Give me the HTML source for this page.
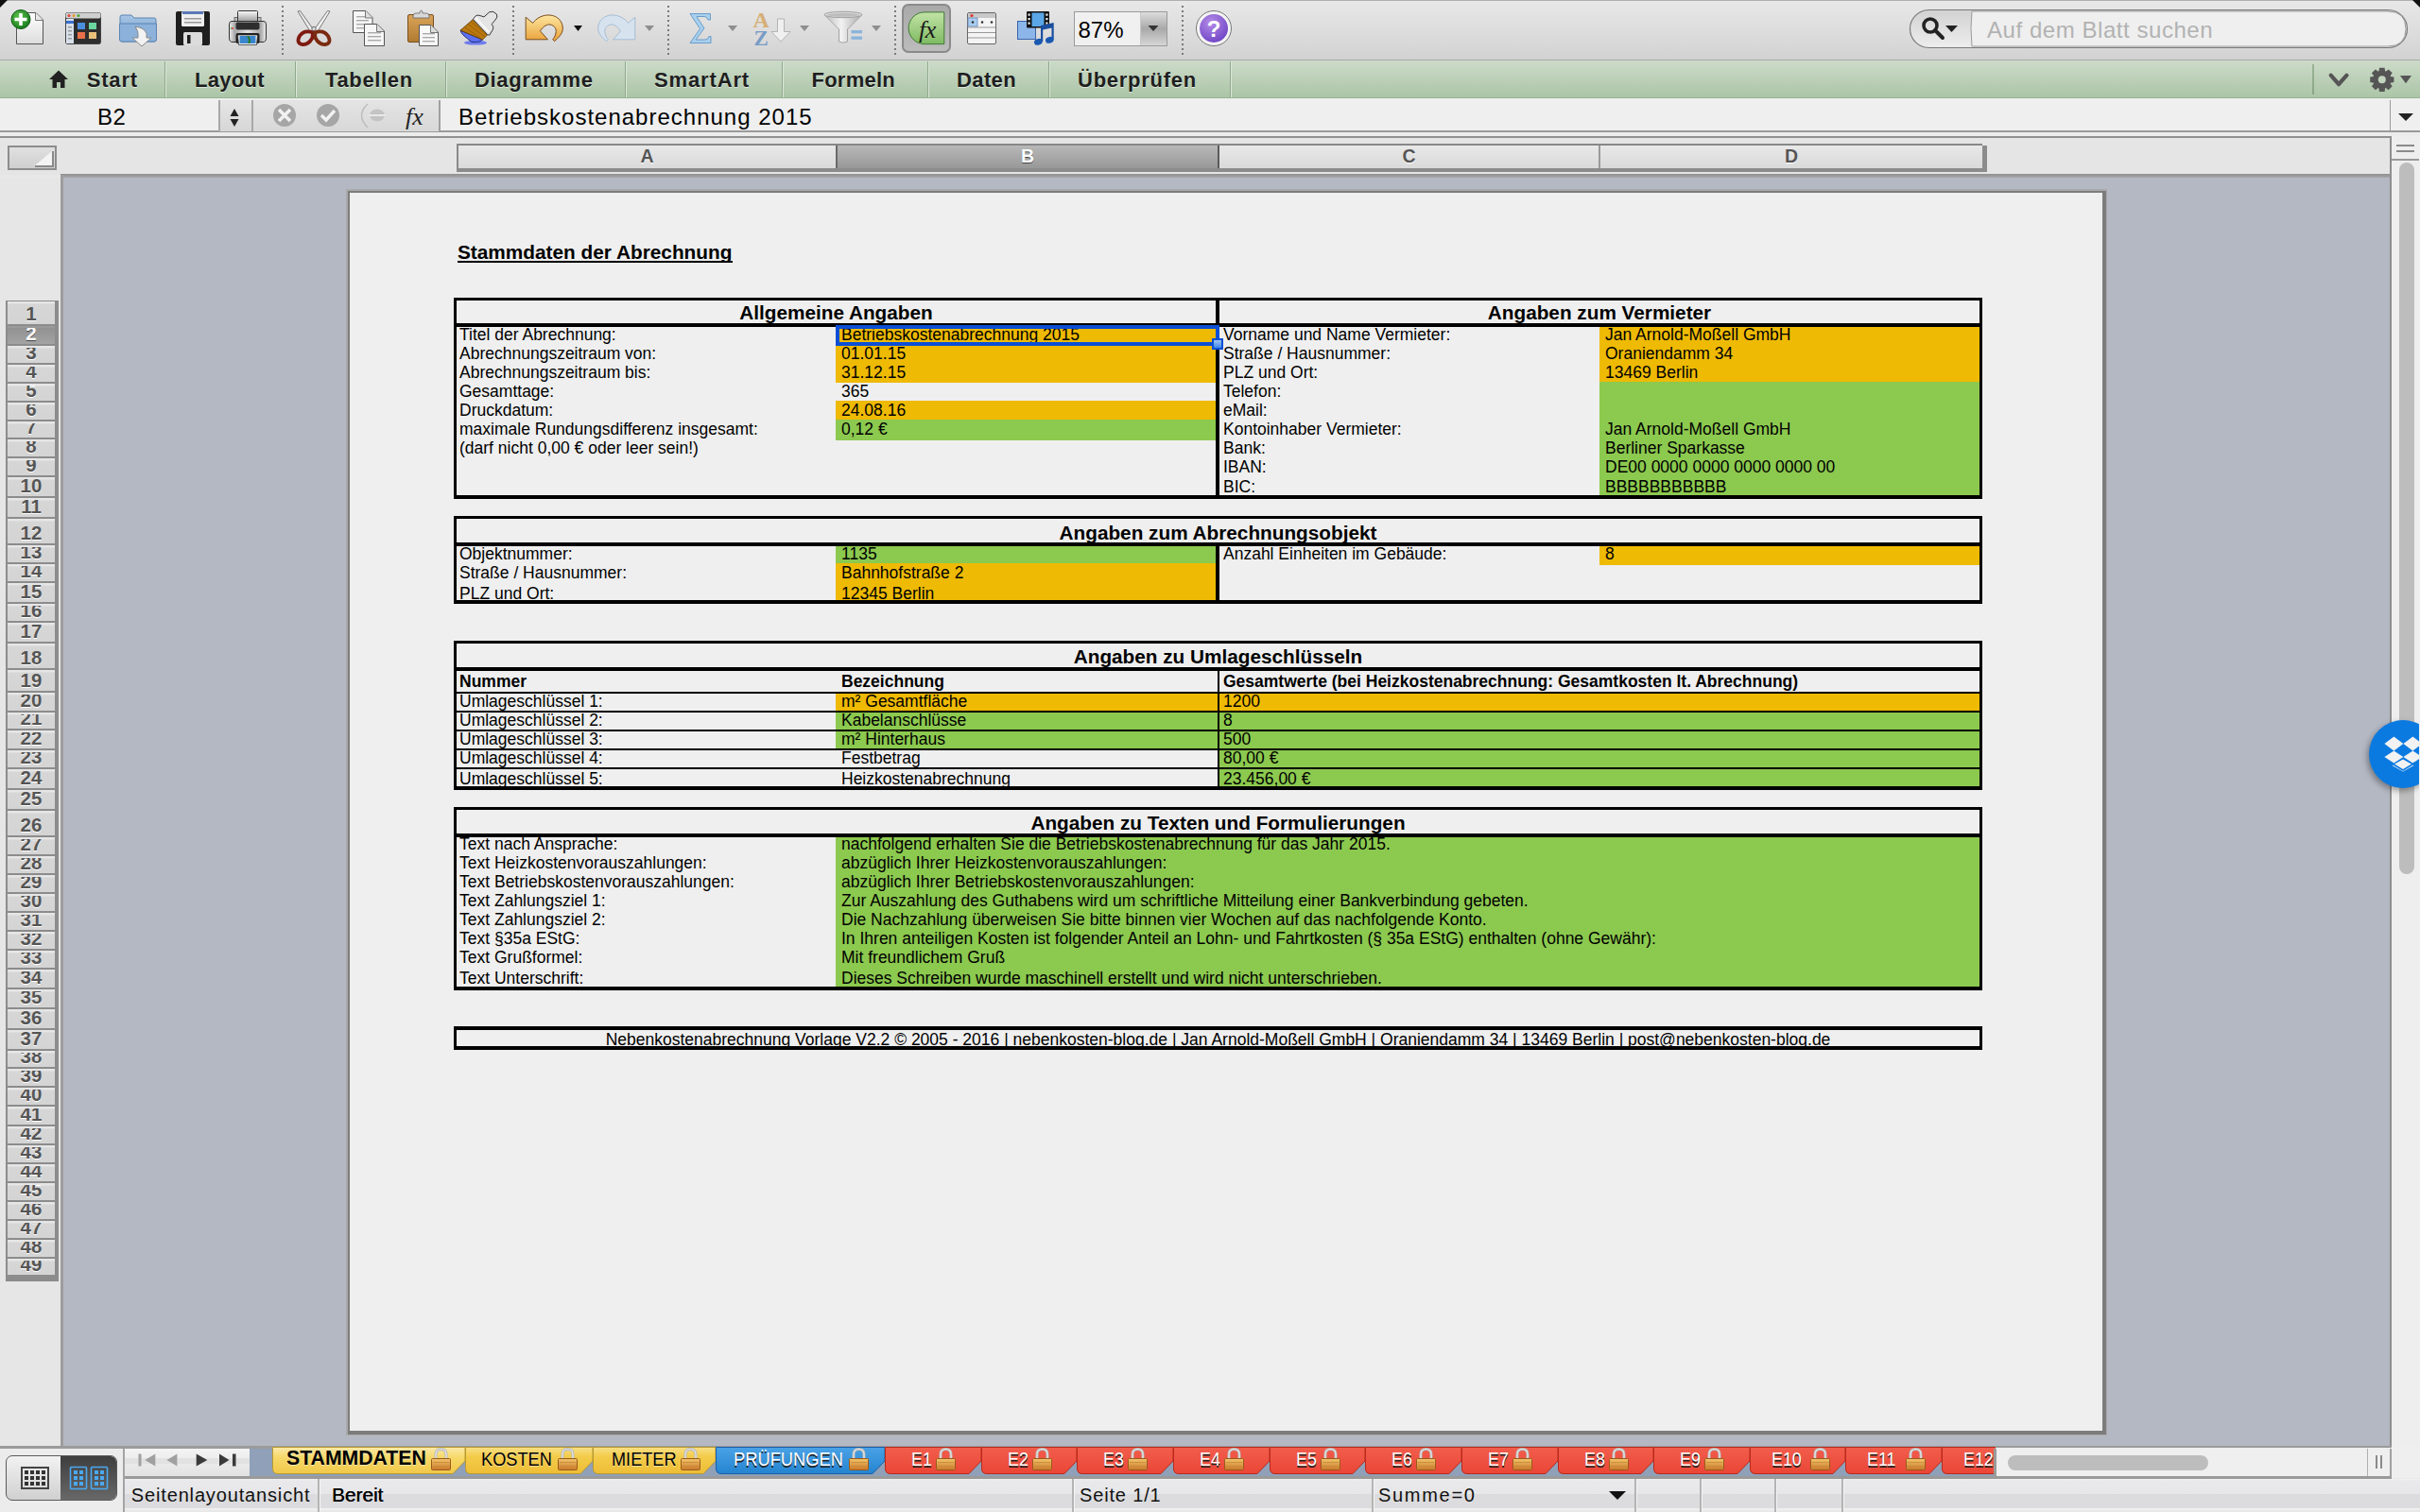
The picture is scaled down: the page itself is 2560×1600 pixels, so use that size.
<!DOCTYPE html>
<html><head><meta charset="utf-8"><title>Excel</title>
<style>
html,body{margin:0;padding:0;}
body{width:2560px;height:1600px;overflow:hidden;position:relative;background:#e8e8e8;font-family:'Liberation Sans', sans-serif;}
body div{position:absolute;}
.t{white-space:pre;}
</style></head><body>
<div style="left:0px;top:0px;width:2560px;height:64px;background:linear-gradient(#e8e8e8,#d2d2d2);"></div>
<div style="left:0px;top:0px;width:2560px;height:1px;background:#b0b0b0;"></div>
<div style="left:0px;top:63px;width:2560px;height:1px;background:#a9a9a9;"></div>
<div style="left:0px;top:64px;width:2560px;height:40px;background:linear-gradient(#cddbc9,#aac4a6);"></div>
<div style="left:0px;top:103px;width:2560px;height:1px;background:#98b294;"></div>
<div style="left:0px;top:104px;width:2560px;height:3px;background:linear-gradient(#dfe9dd,#efefef);"></div>
<div style="left:0px;top:104px;width:2560px;height:35px;background:#efefef;"></div>
<div style="left:0px;top:138px;width:2560px;height:2px;background:#9a9a9a;"></div>
<div style="left:0px;top:140px;width:2560px;height:4px;background:#ececec;"></div>
<div style="left:0px;top:144px;width:2560px;height:2px;background:#919191;"></div>
<div style="left:0px;top:146px;width:2528px;height:39px;background:#e5e5e5;"></div>
<div style="left:64px;top:184px;width:2464px;height:4px;background:linear-gradient(#8e8e8e,#a8a8a8);"></div>
<div style="left:0px;top:188px;width:64px;height:1342px;background:#e6e6e6;"></div>
<div style="left:64px;top:185px;width:3px;height:1345px;background:#9d9d9d;"></div>
<div style="left:67px;top:188px;width:2461px;height:1342px;background:#b4b8c3;"></div>
<div style="left:366px;top:200px;width:1863px;height:1319px;background:#a9a9a9;"></div>
<div style="left:368px;top:202px;width:1860px;height:1316px;background:#7c7c7c;"></div>
<div style="left:370px;top:204px;width:1854px;height:1310px;background:#efefef;"></div>
<div style="left:2528px;top:144px;width:2px;height:1386px;background:#8e8e8e;"></div>
<div style="left:2530px;top:144px;width:30px;height:1386px;background:#eeeeee;"></div>
<div style="left:0px;top:1530px;width:2560px;height:70px;background:#e8e8e8;"></div>
<div style="left:0px;top:1530px;width:2530px;height:3px;background:#9b9b9b;"></div>
<div class="t" style="left:484px;top:256.59px;font-size:20.8px;line-height:20.8px;font-weight:700;color:#000;">Stammdaten der Abrechnung</div>
<div style="left:484px;top:276px;width:291px;height:2px;background:#000;"></div>
<div style="left:884px;top:346px;width:402px;height:20px;background:#eeba04;"></div>
<div style="left:884px;top:366px;width:402px;height:39px;background:#eeba04;"></div>
<div style="left:884px;top:424px;width:402px;height:20px;background:#eeba04;"></div>
<div style="left:884px;top:444px;width:402px;height:22px;background:#8cc94f;"></div>
<div style="left:1692px;top:346px;width:402px;height:58px;background:#eeba04;"></div>
<div style="left:1692px;top:404px;width:402px;height:120px;background:#8cc94f;"></div>
<div style="left:480px;top:315px;width:3px;height:213px;background:#000;"></div>
<div style="left:2094px;top:315px;width:3px;height:213px;background:#000;"></div>
<div style="left:480px;top:315px;width:1617px;height:3px;background:#000;"></div>
<div style="left:480px;top:524px;width:1617px;height:4px;background:#000;"></div>
<div style="left:480px;top:342px;width:1617px;height:4px;background:#000;"></div>
<div style="left:1286px;top:315px;width:4px;height:213px;background:#000;"></div>
<div class="t" style="left:483px;width:803px;text-align:center;top:321.44px;font-size:20.75px;line-height:20.75px;font-weight:700;color:#000;">Allgemeine Angaben</div>
<div class="t" style="left:1290px;width:804px;text-align:center;top:321.44px;font-size:20.75px;line-height:20.75px;font-weight:700;color:#000;">Angaben zum Vermieter</div>
<div class="t" style="left:486px;top:345.89px;font-size:17.5px;line-height:17.5px;font-weight:400;color:#000;">Titel der Abrechnung:</div>
<div class="t" style="left:890px;top:345.89px;font-size:17.5px;line-height:17.5px;font-weight:400;color:#000;">Betriebskostenabrechnung 2015</div>
<div class="t" style="left:1294px;top:345.89px;font-size:17.5px;line-height:17.5px;font-weight:400;color:#000;">Vorname und Name Vermieter:</div>
<div class="t" style="left:1698px;top:345.89px;font-size:17.5px;line-height:17.5px;font-weight:400;color:#000;">Jan Arnold-Moßell GmbH</div>
<div class="t" style="left:486px;top:365.89px;font-size:17.5px;line-height:17.5px;font-weight:400;color:#000;">Abrechnungszeitraum von:</div>
<div class="t" style="left:890px;top:365.89px;font-size:17.5px;line-height:17.5px;font-weight:400;color:#000;">01.01.15</div>
<div class="t" style="left:1294px;top:365.89px;font-size:17.5px;line-height:17.5px;font-weight:400;color:#000;">Straße / Hausnummer:</div>
<div class="t" style="left:1698px;top:365.89px;font-size:17.5px;line-height:17.5px;font-weight:400;color:#000;">Oraniendamm 34</div>
<div class="t" style="left:486px;top:385.89px;font-size:17.5px;line-height:17.5px;font-weight:400;color:#000;">Abrechnungszeitraum bis:</div>
<div class="t" style="left:890px;top:385.89px;font-size:17.5px;line-height:17.5px;font-weight:400;color:#000;">31.12.15</div>
<div class="t" style="left:1294px;top:385.89px;font-size:17.5px;line-height:17.5px;font-weight:400;color:#000;">PLZ und Ort:</div>
<div class="t" style="left:1698px;top:385.89px;font-size:17.5px;line-height:17.5px;font-weight:400;color:#000;">13469 Berlin</div>
<div class="t" style="left:486px;top:405.89px;font-size:17.5px;line-height:17.5px;font-weight:400;color:#000;">Gesamttage:</div>
<div class="t" style="left:890px;top:405.89px;font-size:17.5px;line-height:17.5px;font-weight:400;color:#000;">365</div>
<div class="t" style="left:1294px;top:405.89px;font-size:17.5px;line-height:17.5px;font-weight:400;color:#000;">Telefon:</div>
<div class="t" style="left:486px;top:425.89px;font-size:17.5px;line-height:17.5px;font-weight:400;color:#000;">Druckdatum:</div>
<div class="t" style="left:890px;top:425.89px;font-size:17.5px;line-height:17.5px;font-weight:400;color:#000;">24.08.16</div>
<div class="t" style="left:1294px;top:425.89px;font-size:17.5px;line-height:17.5px;font-weight:400;color:#000;">eMail:</div>
<div class="t" style="left:486px;top:445.89px;font-size:17.5px;line-height:17.5px;font-weight:400;color:#000;">maximale Rundungsdifferenz insgesamt:</div>
<div class="t" style="left:890px;top:445.89px;font-size:17.5px;line-height:17.5px;font-weight:400;color:#000;">0,12 €</div>
<div class="t" style="left:1294px;top:445.89px;font-size:17.5px;line-height:17.5px;font-weight:400;color:#000;">Kontoinhaber Vermieter:</div>
<div class="t" style="left:1698px;top:445.89px;font-size:17.5px;line-height:17.5px;font-weight:400;color:#000;">Jan Arnold-Moßell GmbH</div>
<div class="t" style="left:486px;top:465.89px;font-size:17.5px;line-height:17.5px;font-weight:400;color:#000;">(darf nicht 0,00 € oder leer sein!)</div>
<div class="t" style="left:1294px;top:465.89px;font-size:17.5px;line-height:17.5px;font-weight:400;color:#000;">Bank:</div>
<div class="t" style="left:1698px;top:465.89px;font-size:17.5px;line-height:17.5px;font-weight:400;color:#000;">Berliner Sparkasse</div>
<div class="t" style="left:1294px;top:485.89px;font-size:17.5px;line-height:17.5px;font-weight:400;color:#000;">IBAN:</div>
<div class="t" style="left:1698px;top:485.89px;font-size:17.5px;line-height:17.5px;font-weight:400;color:#000;">DE00 0000 0000 0000 0000 00</div>
<div class="t" style="left:1294px;top:506.89px;font-size:17.5px;line-height:17.5px;font-weight:400;color:#000;">BIC:</div>
<div class="t" style="left:1698px;top:506.89px;font-size:17.5px;line-height:17.5px;font-weight:400;color:#000;">BBBBBBBBBBB</div>
<div style="left:884px;top:344px;width:406px;height:22px;box-sizing:border-box;border:4px solid #0b4fd6;"></div>
<div style="left:1282px;top:358px;width:12px;height:12px;box-sizing:border-box;border:2px solid #0b4fd6;background:linear-gradient(#9cc4f4,#3d86e8);"></div>
<div style="left:884px;top:578px;width:402px;height:18px;background:#8cc94f;"></div>
<div style="left:884px;top:596px;width:402px;height:39px;background:#eeba04;"></div>
<div style="left:1692px;top:578px;width:402px;height:20px;background:#eeba04;"></div>
<div style="left:480px;top:546px;width:3px;height:93px;background:#000;"></div>
<div style="left:2094px;top:546px;width:3px;height:93px;background:#000;"></div>
<div style="left:480px;top:546px;width:1617px;height:3px;background:#000;"></div>
<div style="left:480px;top:635px;width:1617px;height:4px;background:#000;"></div>
<div style="left:480px;top:574px;width:1617px;height:4px;background:#000;"></div>
<div style="left:1286px;top:574px;width:4px;height:65px;background:#000;"></div>
<div class="t" style="left:483px;width:1611px;text-align:center;top:553.64px;font-size:20.75px;line-height:20.75px;font-weight:700;color:#000;">Angaben zum Abrechnungsobjekt</div>
<div class="t" style="left:486px;top:577.89px;font-size:17.5px;line-height:17.5px;font-weight:400;color:#000;">Objektnummer:</div>
<div class="t" style="left:890px;top:577.89px;font-size:17.5px;line-height:17.5px;font-weight:400;color:#000;">1135</div>
<div class="t" style="left:1294px;top:577.89px;font-size:17.5px;line-height:17.5px;font-weight:400;color:#000;">Anzahl Einheiten im Gebäude:</div>
<div class="t" style="left:1698px;top:577.89px;font-size:17.5px;line-height:17.5px;font-weight:400;color:#000;">8</div>
<div class="t" style="left:486px;top:598.09px;font-size:17.5px;line-height:17.5px;font-weight:400;color:#000;">Straße / Hausnummer:</div>
<div class="t" style="left:890px;top:598.09px;font-size:17.5px;line-height:17.5px;font-weight:400;color:#000;">Bahnhofstraße 2</div>
<div class="t" style="left:486px;top:619.59px;font-size:17.5px;line-height:17.5px;font-weight:400;color:#000;">PLZ und Ort:</div>
<div class="t" style="left:890px;top:619.59px;font-size:17.5px;line-height:17.5px;font-weight:400;color:#000;">12345 Berlin</div>
<div style="left:884px;top:734px;width:404px;height:18px;background:#eeba04;"></div>
<div style="left:1290px;top:734px;width:804px;height:18px;background:#eeba04;"></div>
<div style="left:884px;top:752px;width:404px;height:40px;background:#8cc94f;"></div>
<div style="left:1290px;top:752px;width:804px;height:80px;background:#8cc94f;"></div>
<div style="left:480px;top:678px;width:3px;height:158px;background:#000;"></div>
<div style="left:2094px;top:678px;width:3px;height:158px;background:#000;"></div>
<div style="left:480px;top:678px;width:1617px;height:3px;background:#000;"></div>
<div style="left:480px;top:832px;width:1617px;height:4px;background:#000;"></div>
<div style="left:480px;top:706px;width:1617px;height:4px;background:#000;"></div>
<div style="left:480px;top:732px;width:1617px;height:2px;background:#000;"></div>
<div style="left:480px;top:752px;width:1617px;height:2px;background:#000;"></div>
<div style="left:480px;top:772px;width:1617px;height:2px;background:#000;"></div>
<div style="left:480px;top:792px;width:1617px;height:2px;background:#000;"></div>
<div style="left:480px;top:812px;width:1617px;height:2px;background:#000;"></div>
<div style="left:1288px;top:706px;width:2px;height:130px;background:#000;"></div>
<div class="t" style="left:483px;width:1611px;text-align:center;top:685.14px;font-size:20.75px;line-height:20.75px;font-weight:700;color:#000;">Angaben zu Umlageschlüsseln</div>
<div class="t" style="left:486px;top:712.59px;font-size:17.5px;line-height:17.5px;font-weight:700;color:#000;">Nummer</div>
<div class="t" style="left:890px;top:712.59px;font-size:17.5px;line-height:17.5px;font-weight:700;color:#000;">Bezeichnung</div>
<div class="t" style="left:1294px;top:712.59px;font-size:17.5px;line-height:17.5px;font-weight:700;color:#000;">Gesamtwerte (bei Heizkostenabrechnung: Gesamtkosten lt. Abrechnung)</div>
<div class="t" style="left:486px;top:734.19px;font-size:17.5px;line-height:17.5px;font-weight:400;color:#000;">Umlageschlüssel 1:</div>
<div class="t" style="left:890px;top:734.19px;font-size:17.5px;line-height:17.5px;font-weight:400;color:#000;">m² Gesamtfläche</div>
<div class="t" style="left:1294px;top:734.19px;font-size:17.5px;line-height:17.5px;font-weight:400;color:#000;">1200</div>
<div class="t" style="left:486px;top:753.89px;font-size:17.5px;line-height:17.5px;font-weight:400;color:#000;">Umlageschlüssel 2:</div>
<div class="t" style="left:890px;top:753.89px;font-size:17.5px;line-height:17.5px;font-weight:400;color:#000;">Kabelanschlüsse</div>
<div class="t" style="left:1294px;top:753.89px;font-size:17.5px;line-height:17.5px;font-weight:400;color:#000;">8</div>
<div class="t" style="left:486px;top:774.09px;font-size:17.5px;line-height:17.5px;font-weight:400;color:#000;">Umlageschlüssel 3:</div>
<div class="t" style="left:890px;top:774.09px;font-size:17.5px;line-height:17.5px;font-weight:400;color:#000;">m² Hinterhaus</div>
<div class="t" style="left:1294px;top:774.09px;font-size:17.5px;line-height:17.5px;font-weight:400;color:#000;">500</div>
<div class="t" style="left:486px;top:793.89px;font-size:17.5px;line-height:17.5px;font-weight:400;color:#000;">Umlageschlüssel 4:</div>
<div class="t" style="left:890px;top:793.89px;font-size:17.5px;line-height:17.5px;font-weight:400;color:#000;">Festbetrag</div>
<div class="t" style="left:1294px;top:793.89px;font-size:17.5px;line-height:17.5px;font-weight:400;color:#000;">80,00 €</div>
<div class="t" style="left:486px;top:815.69px;font-size:17.5px;line-height:17.5px;font-weight:400;color:#000;">Umlageschlüssel 5:</div>
<div class="t" style="left:890px;top:815.69px;font-size:17.5px;line-height:17.5px;font-weight:400;color:#000;">Heizkostenabrechnung</div>
<div class="t" style="left:1294px;top:815.69px;font-size:17.5px;line-height:17.5px;font-weight:400;color:#000;">23.456,00 €</div>
<div style="left:884px;top:886px;width:1210px;height:158px;background:#8cc94f;"></div>
<div style="left:480px;top:854px;width:3px;height:194px;background:#000;"></div>
<div style="left:2094px;top:854px;width:3px;height:194px;background:#000;"></div>
<div style="left:480px;top:854px;width:1617px;height:3px;background:#000;"></div>
<div style="left:480px;top:1044px;width:1617px;height:4px;background:#000;"></div>
<div style="left:480px;top:882px;width:1617px;height:4px;background:#000;"></div>
<div class="t" style="left:483px;width:1611px;text-align:center;top:860.94px;font-size:20.75px;line-height:20.75px;font-weight:700;color:#000;">Angaben zu Texten und Formulierungen</div>
<div class="t" style="left:486px;top:885.49px;font-size:17.5px;line-height:17.5px;font-weight:400;color:#000;">Text nach Ansprache:</div>
<div class="t" style="left:890px;top:885.49px;font-size:17.5px;line-height:17.5px;font-weight:400;color:#000;">nachfolgend erhalten Sie die Betriebskostenabrechnung für das Jahr 2015.</div>
<div class="t" style="left:486px;top:905.49px;font-size:17.5px;line-height:17.5px;font-weight:400;color:#000;">Text Heizkostenvorauszahlungen:</div>
<div class="t" style="left:890px;top:905.49px;font-size:17.5px;line-height:17.5px;font-weight:400;color:#000;">abzüglich Ihrer Heizkostenvorauszahlungen:</div>
<div class="t" style="left:486px;top:925.29px;font-size:17.5px;line-height:17.5px;font-weight:400;color:#000;">Text Betriebskostenvorauszahlungen:</div>
<div class="t" style="left:890px;top:925.29px;font-size:17.5px;line-height:17.5px;font-weight:400;color:#000;">abzüglich Ihrer Betriebskostenvorauszahlungen:</div>
<div class="t" style="left:486px;top:945.29px;font-size:17.5px;line-height:17.5px;font-weight:400;color:#000;">Text Zahlungsziel 1:</div>
<div class="t" style="left:890px;top:945.29px;font-size:17.5px;line-height:17.5px;font-weight:400;color:#000;">Zur Auszahlung des Guthabens wird um schriftliche Mitteilung einer Bankverbindung gebeten.</div>
<div class="t" style="left:486px;top:965.29px;font-size:17.5px;line-height:17.5px;font-weight:400;color:#000;">Text Zahlungsziel 2:</div>
<div class="t" style="left:890px;top:965.29px;font-size:17.5px;line-height:17.5px;font-weight:400;color:#000;">Die Nachzahlung überweisen Sie bitte binnen vier Wochen auf das nachfolgende Konto.</div>
<div class="t" style="left:486px;top:985.19px;font-size:17.5px;line-height:17.5px;font-weight:400;color:#000;">Text §35a EStG:</div>
<div class="t" style="left:890px;top:985.19px;font-size:17.5px;line-height:17.5px;font-weight:400;color:#000;">In Ihren anteiligen Kosten ist folgender Anteil an Lohn- und Fahrtkosten (§ 35a EStG) enthalten (ohne Gewähr):</div>
<div class="t" style="left:486px;top:1005.19px;font-size:17.5px;line-height:17.5px;font-weight:400;color:#000;">Text Grußformel:</div>
<div class="t" style="left:890px;top:1005.19px;font-size:17.5px;line-height:17.5px;font-weight:400;color:#000;">Mit freundlichem Gruß</div>
<div class="t" style="left:486px;top:1027.19px;font-size:17.5px;line-height:17.5px;font-weight:400;color:#000;">Text Unterschrift:</div>
<div class="t" style="left:890px;top:1027.19px;font-size:17.5px;line-height:17.5px;font-weight:400;color:#000;">Dieses Schreiben wurde maschinell erstellt und wird nicht unterschrieben.</div>
<div style="left:480px;top:1086px;width:3px;height:25px;background:#000;"></div>
<div style="left:2094px;top:1086px;width:3px;height:25px;background:#000;"></div>
<div style="left:480px;top:1086px;width:1617px;height:4px;background:#000;"></div>
<div style="left:480px;top:1107px;width:1617px;height:4px;background:#000;"></div>
<div class="t" style="left:483px;width:1611px;text-align:center;top:1091.69px;font-size:17.5px;line-height:17.5px;font-weight:400;color:#000;">Nebenkostenabrechnung Vorlage V2.2 © 2005 - 2016 | nebenkosten-blog.de | Jan Arnold-Moßell GmbH | Oraniendamm 34 | 13469 Berlin | post@nebenkosten-blog.de</div>
<div style="left:483px;top:152px;width:1614px;height:26px;background:linear-gradient(#e9e9e9,#dadada);"></div>
<div style="left:483px;top:152px;width:1614px;height:2px;background:#878787;"></div>
<div style="left:483px;top:152px;width:2px;height:30px;background:#8a8a8a;"></div>
<div style="left:485px;top:178px;width:1617px;height:4px;background:#8c8c8c;"></div>
<div style="left:2097px;top:154px;width:5px;height:28px;background:#8c8c8c;"></div>
<div style="left:885px;top:154px;width:403px;height:24px;background:linear-gradient(#b8b8b8,#989898);"></div>
<div style="left:884px;top:154px;width:2px;height:24px;background:#6a6a6a;"></div>
<div style="left:1288px;top:154px;width:2px;height:24px;background:#5a5a5a;"></div>
<div style="left:1691px;top:154px;width:2px;height:24px;background:#9a9a9a;"></div>
<div class="t" style="left:484px;width:401px;text-align:center;top:155.89px;font-size:19.5px;line-height:19.5px;font-weight:700;color:#555555;text-shadow:0 1px 0 #fff;">A</div>
<div class="t" style="left:886px;width:402px;text-align:center;top:155.89px;font-size:19.5px;line-height:19.5px;font-weight:700;color:#ffffff;text-shadow:0 1px 0 #444;">B</div>
<div class="t" style="left:1290px;width:401px;text-align:center;top:155.89px;font-size:19.5px;line-height:19.5px;font-weight:700;color:#555555;text-shadow:0 1px 0 #fff;">C</div>
<div class="t" style="left:1693px;width:404px;text-align:center;top:155.89px;font-size:19.5px;line-height:19.5px;font-weight:700;color:#555555;text-shadow:0 1px 0 #fff;">D</div>
<div style="left:8px;top:154px;width:52px;height:26px;box-sizing:border-box;border:2px solid #8d8d8d;background:linear-gradient(#e0e0e0,#cfcfcf);"></div>
<svg style="position:absolute;left:20px;top:157px" width="40" height="22"><polygon points="16,19 36,19 36,2" fill="#f4f4f4"/><path d="M17 19 H36 V3" fill="none" stroke="#8a8a8a" stroke-width="2"/></svg>
<div style="left:6px;top:318px;width:56px;height:1038px;background:#8c8c8c;"></div>
<div style="left:8px;top:319px;width:50px;height:24px;background:linear-gradient(#e4e4e4 0,#e4e4e4 2px,#d6d6d6 3px,#d4d4d4 100%);overflow:hidden;"><div style="left:0;top:2.65px;width:50px;text-align:center;font:700 20.5px/20.5px 'Liberation Sans', sans-serif;color:#555555;text-shadow:0 1px 0 #fff;">1</div><div style="left:0;top:0;width:50px;height:2px;background:#e6e6e6;"></div></div>
<div style="left:8px;top:345px;width:50px;height:19px;background:linear-gradient(#8f8f8f,#a3a3a3);overflow:hidden;"><div style="left:0;top:-2.35px;width:50px;text-align:center;font:700 20.5px/20.5px 'Liberation Sans', sans-serif;color:#ffffff;text-shadow:0 1px 0 #444;">2</div><div style="left:0;top:0;width:50px;height:2px;background:#9a9a9a;"></div></div>
<div style="left:8px;top:366px;width:50px;height:18px;background:linear-gradient(#e4e4e4 0,#e4e4e4 2px,#d6d6d6 3px,#d4d4d4 100%);overflow:hidden;"><div style="left:0;top:-3.35px;width:50px;text-align:center;font:700 20.5px/20.5px 'Liberation Sans', sans-serif;color:#555555;text-shadow:0 1px 0 #fff;">3</div><div style="left:0;top:0;width:50px;height:2px;background:#e6e6e6;"></div></div>
<div style="left:8px;top:386px;width:50px;height:18px;background:linear-gradient(#e4e4e4 0,#e4e4e4 2px,#d6d6d6 3px,#d4d4d4 100%);overflow:hidden;"><div style="left:0;top:-3.35px;width:50px;text-align:center;font:700 20.5px/20.5px 'Liberation Sans', sans-serif;color:#555555;text-shadow:0 1px 0 #fff;">4</div><div style="left:0;top:0;width:50px;height:2px;background:#e6e6e6;"></div></div>
<div style="left:8px;top:406px;width:50px;height:18px;background:linear-gradient(#e4e4e4 0,#e4e4e4 2px,#d6d6d6 3px,#d4d4d4 100%);overflow:hidden;"><div style="left:0;top:-3.35px;width:50px;text-align:center;font:700 20.5px/20.5px 'Liberation Sans', sans-serif;color:#555555;text-shadow:0 1px 0 #fff;">5</div><div style="left:0;top:0;width:50px;height:2px;background:#e6e6e6;"></div></div>
<div style="left:8px;top:426px;width:50px;height:18px;background:linear-gradient(#e4e4e4 0,#e4e4e4 2px,#d6d6d6 3px,#d4d4d4 100%);overflow:hidden;"><div style="left:0;top:-3.35px;width:50px;text-align:center;font:700 20.5px/20.5px 'Liberation Sans', sans-serif;color:#555555;text-shadow:0 1px 0 #fff;">6</div><div style="left:0;top:0;width:50px;height:2px;background:#e6e6e6;"></div></div>
<div style="left:8px;top:446px;width:50px;height:17px;background:linear-gradient(#e4e4e4 0,#e4e4e4 2px,#d6d6d6 3px,#d4d4d4 100%);overflow:hidden;"><div style="left:0;top:-4.35px;width:50px;text-align:center;font:700 20.5px/20.5px 'Liberation Sans', sans-serif;color:#555555;text-shadow:0 1px 0 #fff;">7</div><div style="left:0;top:0;width:50px;height:2px;background:#e6e6e6;"></div></div>
<div style="left:8px;top:465px;width:50px;height:18px;background:linear-gradient(#e4e4e4 0,#e4e4e4 2px,#d6d6d6 3px,#d4d4d4 100%);overflow:hidden;"><div style="left:0;top:-3.35px;width:50px;text-align:center;font:700 20.5px/20.5px 'Liberation Sans', sans-serif;color:#555555;text-shadow:0 1px 0 #fff;">8</div><div style="left:0;top:0;width:50px;height:2px;background:#e6e6e6;"></div></div>
<div style="left:8px;top:485px;width:50px;height:18px;background:linear-gradient(#e4e4e4 0,#e4e4e4 2px,#d6d6d6 3px,#d4d4d4 100%);overflow:hidden;"><div style="left:0;top:-3.35px;width:50px;text-align:center;font:700 20.5px/20.5px 'Liberation Sans', sans-serif;color:#555555;text-shadow:0 1px 0 #fff;">9</div><div style="left:0;top:0;width:50px;height:2px;background:#e6e6e6;"></div></div>
<div style="left:8px;top:505px;width:50px;height:20px;background:linear-gradient(#e4e4e4 0,#e4e4e4 2px,#d6d6d6 3px,#d4d4d4 100%);overflow:hidden;"><div style="left:0;top:-1.35px;width:50px;text-align:center;font:700 20.5px/20.5px 'Liberation Sans', sans-serif;color:#555555;text-shadow:0 1px 0 #fff;">10</div><div style="left:0;top:0;width:50px;height:2px;background:#e6e6e6;"></div></div>
<div style="left:8px;top:527px;width:50px;height:20px;background:linear-gradient(#e4e4e4 0,#e4e4e4 2px,#d6d6d6 3px,#d4d4d4 100%);overflow:hidden;"><div style="left:0;top:-1.35px;width:50px;text-align:center;font:700 20.5px/20.5px 'Liberation Sans', sans-serif;color:#555555;text-shadow:0 1px 0 #fff;">11</div><div style="left:0;top:0;width:50px;height:2px;background:#e6e6e6;"></div></div>
<div style="left:8px;top:549px;width:50px;height:26px;background:linear-gradient(#e4e4e4 0,#e4e4e4 2px,#d6d6d6 3px,#d4d4d4 100%);overflow:hidden;"><div style="left:0;top:4.65px;width:50px;text-align:center;font:700 20.5px/20.5px 'Liberation Sans', sans-serif;color:#555555;text-shadow:0 1px 0 #fff;">12</div><div style="left:0;top:0;width:50px;height:2px;background:#e6e6e6;"></div></div>
<div style="left:8px;top:577px;width:50px;height:18px;background:linear-gradient(#e4e4e4 0,#e4e4e4 2px,#d6d6d6 3px,#d4d4d4 100%);overflow:hidden;"><div style="left:0;top:-3.35px;width:50px;text-align:center;font:700 20.5px/20.5px 'Liberation Sans', sans-serif;color:#555555;text-shadow:0 1px 0 #fff;">13</div><div style="left:0;top:0;width:50px;height:2px;background:#e6e6e6;"></div></div>
<div style="left:8px;top:597px;width:50px;height:18px;background:linear-gradient(#e4e4e4 0,#e4e4e4 2px,#d6d6d6 3px,#d4d4d4 100%);overflow:hidden;"><div style="left:0;top:-3.35px;width:50px;text-align:center;font:700 20.5px/20.5px 'Liberation Sans', sans-serif;color:#555555;text-shadow:0 1px 0 #fff;">14</div><div style="left:0;top:0;width:50px;height:2px;background:#e6e6e6;"></div></div>
<div style="left:8px;top:617px;width:50px;height:20px;background:linear-gradient(#e4e4e4 0,#e4e4e4 2px,#d6d6d6 3px,#d4d4d4 100%);overflow:hidden;"><div style="left:0;top:-1.35px;width:50px;text-align:center;font:700 20.5px/20.5px 'Liberation Sans', sans-serif;color:#555555;text-shadow:0 1px 0 #fff;">15</div><div style="left:0;top:0;width:50px;height:2px;background:#e6e6e6;"></div></div>
<div style="left:8px;top:639px;width:50px;height:18px;background:linear-gradient(#e4e4e4 0,#e4e4e4 2px,#d6d6d6 3px,#d4d4d4 100%);overflow:hidden;"><div style="left:0;top:-3.35px;width:50px;text-align:center;font:700 20.5px/20.5px 'Liberation Sans', sans-serif;color:#555555;text-shadow:0 1px 0 #fff;">16</div><div style="left:0;top:0;width:50px;height:2px;background:#e6e6e6;"></div></div>
<div style="left:8px;top:659px;width:50px;height:20px;background:linear-gradient(#e4e4e4 0,#e4e4e4 2px,#d6d6d6 3px,#d4d4d4 100%);overflow:hidden;"><div style="left:0;top:-1.35px;width:50px;text-align:center;font:700 20.5px/20.5px 'Liberation Sans', sans-serif;color:#555555;text-shadow:0 1px 0 #fff;">17</div><div style="left:0;top:0;width:50px;height:2px;background:#e6e6e6;"></div></div>
<div style="left:8px;top:681px;width:50px;height:26px;background:linear-gradient(#e4e4e4 0,#e4e4e4 2px,#d6d6d6 3px,#d4d4d4 100%);overflow:hidden;"><div style="left:0;top:4.65px;width:50px;text-align:center;font:700 20.5px/20.5px 'Liberation Sans', sans-serif;color:#555555;text-shadow:0 1px 0 #fff;">18</div><div style="left:0;top:0;width:50px;height:2px;background:#e6e6e6;"></div></div>
<div style="left:8px;top:709px;width:50px;height:22px;background:linear-gradient(#e4e4e4 0,#e4e4e4 2px,#d6d6d6 3px,#d4d4d4 100%);overflow:hidden;"><div style="left:0;top:0.65px;width:50px;text-align:center;font:700 20.5px/20.5px 'Liberation Sans', sans-serif;color:#555555;text-shadow:0 1px 0 #fff;">19</div><div style="left:0;top:0;width:50px;height:2px;background:#e6e6e6;"></div></div>
<div style="left:8px;top:733px;width:50px;height:19px;background:linear-gradient(#e4e4e4 0,#e4e4e4 2px,#d6d6d6 3px,#d4d4d4 100%);overflow:hidden;"><div style="left:0;top:-2.35px;width:50px;text-align:center;font:700 20.5px/20.5px 'Liberation Sans', sans-serif;color:#555555;text-shadow:0 1px 0 #fff;">20</div><div style="left:0;top:0;width:50px;height:2px;background:#e6e6e6;"></div></div>
<div style="left:8px;top:754px;width:50px;height:17px;background:linear-gradient(#e4e4e4 0,#e4e4e4 2px,#d6d6d6 3px,#d4d4d4 100%);overflow:hidden;"><div style="left:0;top:-4.35px;width:50px;text-align:center;font:700 20.5px/20.5px 'Liberation Sans', sans-serif;color:#555555;text-shadow:0 1px 0 #fff;">21</div><div style="left:0;top:0;width:50px;height:2px;background:#e6e6e6;"></div></div>
<div style="left:8px;top:773px;width:50px;height:19px;background:linear-gradient(#e4e4e4 0,#e4e4e4 2px,#d6d6d6 3px,#d4d4d4 100%);overflow:hidden;"><div style="left:0;top:-2.35px;width:50px;text-align:center;font:700 20.5px/20.5px 'Liberation Sans', sans-serif;color:#555555;text-shadow:0 1px 0 #fff;">22</div><div style="left:0;top:0;width:50px;height:2px;background:#e6e6e6;"></div></div>
<div style="left:8px;top:794px;width:50px;height:18px;background:linear-gradient(#e4e4e4 0,#e4e4e4 2px,#d6d6d6 3px,#d4d4d4 100%);overflow:hidden;"><div style="left:0;top:-3.35px;width:50px;text-align:center;font:700 20.5px/20.5px 'Liberation Sans', sans-serif;color:#555555;text-shadow:0 1px 0 #fff;">23</div><div style="left:0;top:0;width:50px;height:2px;background:#e6e6e6;"></div></div>
<div style="left:8px;top:814px;width:50px;height:20px;background:linear-gradient(#e4e4e4 0,#e4e4e4 2px,#d6d6d6 3px,#d4d4d4 100%);overflow:hidden;"><div style="left:0;top:-1.35px;width:50px;text-align:center;font:700 20.5px/20.5px 'Liberation Sans', sans-serif;color:#555555;text-shadow:0 1px 0 #fff;">24</div><div style="left:0;top:0;width:50px;height:2px;background:#e6e6e6;"></div></div>
<div style="left:8px;top:836px;width:50px;height:20px;background:linear-gradient(#e4e4e4 0,#e4e4e4 2px,#d6d6d6 3px,#d4d4d4 100%);overflow:hidden;"><div style="left:0;top:-1.35px;width:50px;text-align:center;font:700 20.5px/20.5px 'Liberation Sans', sans-serif;color:#555555;text-shadow:0 1px 0 #fff;">25</div><div style="left:0;top:0;width:50px;height:2px;background:#e6e6e6;"></div></div>
<div style="left:8px;top:858px;width:50px;height:26px;background:linear-gradient(#e4e4e4 0,#e4e4e4 2px,#d6d6d6 3px,#d4d4d4 100%);overflow:hidden;"><div style="left:0;top:4.65px;width:50px;text-align:center;font:700 20.5px/20.5px 'Liberation Sans', sans-serif;color:#555555;text-shadow:0 1px 0 #fff;">26</div><div style="left:0;top:0;width:50px;height:2px;background:#e6e6e6;"></div></div>
<div style="left:8px;top:886px;width:50px;height:18px;background:linear-gradient(#e4e4e4 0,#e4e4e4 2px,#d6d6d6 3px,#d4d4d4 100%);overflow:hidden;"><div style="left:0;top:-3.35px;width:50px;text-align:center;font:700 20.5px/20.5px 'Liberation Sans', sans-serif;color:#555555;text-shadow:0 1px 0 #fff;">27</div><div style="left:0;top:0;width:50px;height:2px;background:#e6e6e6;"></div></div>
<div style="left:8px;top:906px;width:50px;height:18px;background:linear-gradient(#e4e4e4 0,#e4e4e4 2px,#d6d6d6 3px,#d4d4d4 100%);overflow:hidden;"><div style="left:0;top:-3.35px;width:50px;text-align:center;font:700 20.5px/20.5px 'Liberation Sans', sans-serif;color:#555555;text-shadow:0 1px 0 #fff;">28</div><div style="left:0;top:0;width:50px;height:2px;background:#e6e6e6;"></div></div>
<div style="left:8px;top:926px;width:50px;height:18px;background:linear-gradient(#e4e4e4 0,#e4e4e4 2px,#d6d6d6 3px,#d4d4d4 100%);overflow:hidden;"><div style="left:0;top:-3.35px;width:50px;text-align:center;font:700 20.5px/20.5px 'Liberation Sans', sans-serif;color:#555555;text-shadow:0 1px 0 #fff;">29</div><div style="left:0;top:0;width:50px;height:2px;background:#e6e6e6;"></div></div>
<div style="left:8px;top:946px;width:50px;height:18px;background:linear-gradient(#e4e4e4 0,#e4e4e4 2px,#d6d6d6 3px,#d4d4d4 100%);overflow:hidden;"><div style="left:0;top:-3.35px;width:50px;text-align:center;font:700 20.5px/20.5px 'Liberation Sans', sans-serif;color:#555555;text-shadow:0 1px 0 #fff;">30</div><div style="left:0;top:0;width:50px;height:2px;background:#e6e6e6;"></div></div>
<div style="left:8px;top:966px;width:50px;height:18px;background:linear-gradient(#e4e4e4 0,#e4e4e4 2px,#d6d6d6 3px,#d4d4d4 100%);overflow:hidden;"><div style="left:0;top:-3.35px;width:50px;text-align:center;font:700 20.5px/20.5px 'Liberation Sans', sans-serif;color:#555555;text-shadow:0 1px 0 #fff;">31</div><div style="left:0;top:0;width:50px;height:2px;background:#e6e6e6;"></div></div>
<div style="left:8px;top:986px;width:50px;height:18px;background:linear-gradient(#e4e4e4 0,#e4e4e4 2px,#d6d6d6 3px,#d4d4d4 100%);overflow:hidden;"><div style="left:0;top:-3.35px;width:50px;text-align:center;font:700 20.5px/20.5px 'Liberation Sans', sans-serif;color:#555555;text-shadow:0 1px 0 #fff;">32</div><div style="left:0;top:0;width:50px;height:2px;background:#e6e6e6;"></div></div>
<div style="left:8px;top:1006px;width:50px;height:18px;background:linear-gradient(#e4e4e4 0,#e4e4e4 2px,#d6d6d6 3px,#d4d4d4 100%);overflow:hidden;"><div style="left:0;top:-3.35px;width:50px;text-align:center;font:700 20.5px/20.5px 'Liberation Sans', sans-serif;color:#555555;text-shadow:0 1px 0 #fff;">33</div><div style="left:0;top:0;width:50px;height:2px;background:#e6e6e6;"></div></div>
<div style="left:8px;top:1026px;width:50px;height:19px;background:linear-gradient(#e4e4e4 0,#e4e4e4 2px,#d6d6d6 3px,#d4d4d4 100%);overflow:hidden;"><div style="left:0;top:-2.35px;width:50px;text-align:center;font:700 20.5px/20.5px 'Liberation Sans', sans-serif;color:#555555;text-shadow:0 1px 0 #fff;">34</div><div style="left:0;top:0;width:50px;height:2px;background:#e6e6e6;"></div></div>
<div style="left:8px;top:1047px;width:50px;height:19px;background:linear-gradient(#e4e4e4 0,#e4e4e4 2px,#d6d6d6 3px,#d4d4d4 100%);overflow:hidden;"><div style="left:0;top:-2.35px;width:50px;text-align:center;font:700 20.5px/20.5px 'Liberation Sans', sans-serif;color:#555555;text-shadow:0 1px 0 #fff;">35</div><div style="left:0;top:0;width:50px;height:2px;background:#e6e6e6;"></div></div>
<div style="left:8px;top:1068px;width:50px;height:20px;background:linear-gradient(#e4e4e4 0,#e4e4e4 2px,#d6d6d6 3px,#d4d4d4 100%);overflow:hidden;"><div style="left:0;top:-1.35px;width:50px;text-align:center;font:700 20.5px/20.5px 'Liberation Sans', sans-serif;color:#555555;text-shadow:0 1px 0 #fff;">36</div><div style="left:0;top:0;width:50px;height:2px;background:#e6e6e6;"></div></div>
<div style="left:8px;top:1090px;width:50px;height:20px;background:linear-gradient(#e4e4e4 0,#e4e4e4 2px,#d6d6d6 3px,#d4d4d4 100%);overflow:hidden;"><div style="left:0;top:-1.35px;width:50px;text-align:center;font:700 20.5px/20.5px 'Liberation Sans', sans-serif;color:#555555;text-shadow:0 1px 0 #fff;">37</div><div style="left:0;top:0;width:50px;height:2px;background:#e6e6e6;"></div></div>
<div style="left:8px;top:1112px;width:50px;height:17px;background:linear-gradient(#e4e4e4 0,#e4e4e4 2px,#d6d6d6 3px,#d4d4d4 100%);overflow:hidden;"><div style="left:0;top:-4.35px;width:50px;text-align:center;font:700 20.5px/20.5px 'Liberation Sans', sans-serif;color:#555555;text-shadow:0 1px 0 #fff;">38</div><div style="left:0;top:0;width:50px;height:2px;background:#e6e6e6;"></div></div>
<div style="left:8px;top:1131px;width:50px;height:18px;background:linear-gradient(#e4e4e4 0,#e4e4e4 2px,#d6d6d6 3px,#d4d4d4 100%);overflow:hidden;"><div style="left:0;top:-3.35px;width:50px;text-align:center;font:700 20.5px/20.5px 'Liberation Sans', sans-serif;color:#555555;text-shadow:0 1px 0 #fff;">39</div><div style="left:0;top:0;width:50px;height:2px;background:#e6e6e6;"></div></div>
<div style="left:8px;top:1151px;width:50px;height:18px;background:linear-gradient(#e4e4e4 0,#e4e4e4 2px,#d6d6d6 3px,#d4d4d4 100%);overflow:hidden;"><div style="left:0;top:-3.35px;width:50px;text-align:center;font:700 20.5px/20.5px 'Liberation Sans', sans-serif;color:#555555;text-shadow:0 1px 0 #fff;">40</div><div style="left:0;top:0;width:50px;height:2px;background:#e6e6e6;"></div></div>
<div style="left:8px;top:1171px;width:50px;height:19px;background:linear-gradient(#e4e4e4 0,#e4e4e4 2px,#d6d6d6 3px,#d4d4d4 100%);overflow:hidden;"><div style="left:0;top:-2.35px;width:50px;text-align:center;font:700 20.5px/20.5px 'Liberation Sans', sans-serif;color:#555555;text-shadow:0 1px 0 #fff;">41</div><div style="left:0;top:0;width:50px;height:2px;background:#e6e6e6;"></div></div>
<div style="left:8px;top:1192px;width:50px;height:18px;background:linear-gradient(#e4e4e4 0,#e4e4e4 2px,#d6d6d6 3px,#d4d4d4 100%);overflow:hidden;"><div style="left:0;top:-3.35px;width:50px;text-align:center;font:700 20.5px/20.5px 'Liberation Sans', sans-serif;color:#555555;text-shadow:0 1px 0 #fff;">42</div><div style="left:0;top:0;width:50px;height:2px;background:#e6e6e6;"></div></div>
<div style="left:8px;top:1212px;width:50px;height:18px;background:linear-gradient(#e4e4e4 0,#e4e4e4 2px,#d6d6d6 3px,#d4d4d4 100%);overflow:hidden;"><div style="left:0;top:-3.35px;width:50px;text-align:center;font:700 20.5px/20.5px 'Liberation Sans', sans-serif;color:#555555;text-shadow:0 1px 0 #fff;">43</div><div style="left:0;top:0;width:50px;height:2px;background:#e6e6e6;"></div></div>
<div style="left:8px;top:1232px;width:50px;height:18px;background:linear-gradient(#e4e4e4 0,#e4e4e4 2px,#d6d6d6 3px,#d4d4d4 100%);overflow:hidden;"><div style="left:0;top:-3.35px;width:50px;text-align:center;font:700 20.5px/20.5px 'Liberation Sans', sans-serif;color:#555555;text-shadow:0 1px 0 #fff;">44</div><div style="left:0;top:0;width:50px;height:2px;background:#e6e6e6;"></div></div>
<div style="left:8px;top:1252px;width:50px;height:18px;background:linear-gradient(#e4e4e4 0,#e4e4e4 2px,#d6d6d6 3px,#d4d4d4 100%);overflow:hidden;"><div style="left:0;top:-3.35px;width:50px;text-align:center;font:700 20.5px/20.5px 'Liberation Sans', sans-serif;color:#555555;text-shadow:0 1px 0 #fff;">45</div><div style="left:0;top:0;width:50px;height:2px;background:#e6e6e6;"></div></div>
<div style="left:8px;top:1272px;width:50px;height:18px;background:linear-gradient(#e4e4e4 0,#e4e4e4 2px,#d6d6d6 3px,#d4d4d4 100%);overflow:hidden;"><div style="left:0;top:-3.35px;width:50px;text-align:center;font:700 20.5px/20.5px 'Liberation Sans', sans-serif;color:#555555;text-shadow:0 1px 0 #fff;">46</div><div style="left:0;top:0;width:50px;height:2px;background:#e6e6e6;"></div></div>
<div style="left:8px;top:1292px;width:50px;height:18px;background:linear-gradient(#e4e4e4 0,#e4e4e4 2px,#d6d6d6 3px,#d4d4d4 100%);overflow:hidden;"><div style="left:0;top:-3.35px;width:50px;text-align:center;font:700 20.5px/20.5px 'Liberation Sans', sans-serif;color:#555555;text-shadow:0 1px 0 #fff;">47</div><div style="left:0;top:0;width:50px;height:2px;background:#e6e6e6;"></div></div>
<div style="left:8px;top:1312px;width:50px;height:18px;background:linear-gradient(#e4e4e4 0,#e4e4e4 2px,#d6d6d6 3px,#d4d4d4 100%);overflow:hidden;"><div style="left:0;top:-3.35px;width:50px;text-align:center;font:700 20.5px/20.5px 'Liberation Sans', sans-serif;color:#555555;text-shadow:0 1px 0 #fff;">48</div><div style="left:0;top:0;width:50px;height:2px;background:#e6e6e6;"></div></div>
<div style="left:8px;top:1332px;width:50px;height:17px;background:linear-gradient(#e4e4e4 0,#e4e4e4 2px,#d6d6d6 3px,#d4d4d4 100%);overflow:hidden;"><div style="left:0;top:-4.35px;width:50px;text-align:center;font:700 20.5px/20.5px 'Liberation Sans', sans-serif;color:#555555;text-shadow:0 1px 0 #fff;">49</div><div style="left:0;top:0;width:50px;height:2px;background:#e6e6e6;"></div></div>
<svg style="position:absolute;left:0;top:0" width="2560" height="64"><defs><linearGradient id="gDoc" x1="0" y1="0" x2="0" y2="1"><stop offset="0" stop-color="#ffffff"/><stop offset="1" stop-color="#dcdcdc"/></linearGradient><radialGradient id="gPlus" cx="0.4" cy="0.35" r="0.7"><stop offset="0" stop-color="#5cc04a"/><stop offset="1" stop-color="#157a1a"/></radialGradient><linearGradient id="gFold" x1="0" y1="0" x2="0" y2="1"><stop offset="0" stop-color="#a9c6e6"/><stop offset="1" stop-color="#6a98c8"/></linearGradient><linearGradient id="gUndo" x1="0" y1="0" x2="0" y2="1"><stop offset="0" stop-color="#fde7a0"/><stop offset="1" stop-color="#e9a23a"/></linearGradient><linearGradient id="gFx" x1="0" y1="0" x2="0" y2="1"><stop offset="0" stop-color="#c2e3a6"/><stop offset="1" stop-color="#7fba62"/></linearGradient><linearGradient id="gBtn" x1="0" y1="0" x2="0" y2="1"><stop offset="0" stop-color="#a9a9a9"/><stop offset="1" stop-color="#bcbcbc"/></linearGradient><radialGradient id="gHelp" cx="0.4" cy="0.3" r="0.8"><stop offset="0" stop-color="#b48be6"/><stop offset="1" stop-color="#6a3fc4"/></radialGradient><linearGradient id="gPrn" x1="0" y1="0" x2="1" y2="0"><stop offset="0" stop-color="#f0f0f0"/><stop offset="0.15" stop-color="#a8a8a8"/><stop offset="0.5" stop-color="#e6e6e6"/><stop offset="0.85" stop-color="#a8a8a8"/><stop offset="1" stop-color="#f0f0f0"/></linearGradient><linearGradient id="gClip" x1="0" y1="0" x2="0" y2="1"><stop offset="0" stop-color="#d9a35a"/><stop offset="1" stop-color="#b07a30"/></linearGradient><linearGradient id="gFun" x1="0" y1="0" x2="1" y2="0"><stop offset="0" stop-color="#bdbdbd"/><stop offset="0.45" stop-color="#f2f2f2"/><stop offset="1" stop-color="#a8a8a8"/></linearGradient><linearGradient id="gZd" x1="0" y1="0" x2="0" y2="1"><stop offset="0" stop-color="#dcdcdc"/><stop offset="0.5" stop-color="#a9a9a9"/><stop offset="1" stop-color="#d6d6d6"/></linearGradient><linearGradient id="gPaper" x1="0" y1="0" x2="0" y2="1"><stop offset="0" stop-color="#fafafa"/><stop offset="1" stop-color="#9a9a9a"/></linearGradient><linearGradient id="gSearch" x1="0" y1="0" x2="0" y2="1"><stop offset="0" stop-color="#d2d2d2"/><stop offset="1" stop-color="#ededed"/></linearGradient></defs><path d="M17.5 13.5 H38 L45.5 21 V46.5 H17.5 Z" fill="url(#gDoc)" stroke="#555" stroke-width="1"/><path d="M37.5 13.5 V21.5 H45.5" fill="#e8e8e8" stroke="#777" stroke-width="1"/><circle cx="22" cy="20.5" r="10" fill="url(#gPlus)" stroke="#0e5a12" stroke-width="1"/><path d="M22 14 V27 M15.5 20.5 H28.5" stroke="#fff" stroke-width="3.6"/><rect x="69.5" y="13.5" width="37" height="33" rx="2" fill="#2e2e2e" stroke="#444"/><rect x="69.5" y="13.5" width="37" height="6" rx="2" fill="#cfcfcf"/><circle cx="73" cy="16.5" r="1.5" fill="#e0443a"/><circle cx="78" cy="16.5" r="1.5" fill="#e89a2a"/><circle cx="83" cy="16.5" r="1.5" fill="#4aa83a"/><rect x="70" y="20" width="8" height="26" fill="#d8e0ea"/><rect x="70" y="22" width="8" height="3" fill="#3a6fd0"/><rect x="72" y="28" width="4" height="1.5" fill="#999"/><rect x="72" y="32" width="4" height="1.5" fill="#999"/><rect x="72" y="36" width="4" height="1.5" fill="#999"/><rect x="72" y="40" width="4" height="1.5" fill="#999"/><rect x="82" y="24" width="8" height="7" fill="#4a8ee0"/><rect x="94" y="24" width="8" height="7" fill="#6ad6a0"/><rect x="82" y="34" width="8" height="7" fill="#e8704a"/><rect x="94" y="34" width="8" height="7" fill="#e8c07a"/><path d="M127 18 Q127 16 129 16 H139 L142 19 H163 Q165 19 165 21 V42 Q165 44 163 44 H129 Q127 44 127 42 Z" fill="url(#gFold)" stroke="#5a84b2" stroke-width="1"/><path d="M126.5 25 H165.5 V42 Q165.5 44 163 44 H129 Q126.5 44 126.5 42 Z" fill="#8cb2dc" stroke="#5a84b2" stroke-width="1"/><path d="M143 28 Q157 30 155 40 L160 40 L150 49 L140 40 L146 40 Q147 33 143 28 Z" fill="#f2f2f2" stroke="#888" stroke-width="1"/><path d="M186 14 Q186 12 188 12 H220 Q222 12 222 14 V46 Q222 48 220 48 H188 Q186 48 186 46 Z" fill="#1e1e1e"/><rect x="192" y="12" width="24" height="16" rx="1.5" fill="#eeeeee"/><rect x="193" y="12" width="22" height="3" fill="#5a78b8"/><rect x="195" y="19" width="18" height="1.5" fill="#999"/><rect x="195" y="23" width="18" height="1.5" fill="#999"/><rect x="194" y="34" width="20" height="14" rx="1.5" fill="#dcdcdc"/><rect x="198" y="37" width="3.5" height="9" fill="#1e1e1e"/><rect x="248" y="18.5" width="28" height="10" fill="#bdbdbd" stroke="#555" stroke-width="0.8"/><path d="M251.5 23 V12.5 Q251.5 11.5 252.5 11.5 H271.5 Q272.5 11.5 272.5 12.5 V23 Z" fill="url(#gPaper)" stroke="#333" stroke-width="1"/><path d="M245 22.5 Q242.5 22.5 242.5 26 V40 Q242.5 44.5 246 44.5 H278 Q281.5 44.5 281.5 40 V26 Q281.5 22.5 279 22.5 Z" fill="url(#gPrn)" stroke="#333" stroke-width="1"/><rect x="249.5" y="23.5" width="25" height="8" rx="2" fill="#2e2e2e"/><rect x="249.5" y="35" width="25" height="11" rx="2" fill="#1e1e1e"/><path d="M251.5 37 H272.5 L271.5 47.5 H252.5 Z" fill="#fafafa" stroke="#333" stroke-width="0.8"/><rect x="253.5" y="38" width="17" height="8" fill="#3a86cc"/><path d="M261 38 Q264 42 262 46 L264.5 46 Q266 41 263 38 Z" fill="#2a7a2a"/><circle cx="246" cy="30" r="1" fill="#e33"/><circle cx="244.5" cy="30" r="0.8" fill="#3a3"/><rect x="298" y="6" width="2" height="2" fill="#7a7a7a"/><rect x="298" y="11" width="2" height="2" fill="#7a7a7a"/><rect x="298" y="16" width="2" height="2" fill="#7a7a7a"/><rect x="298" y="21" width="2" height="2" fill="#7a7a7a"/><rect x="298" y="26" width="2" height="2" fill="#7a7a7a"/><rect x="298" y="31" width="2" height="2" fill="#7a7a7a"/><rect x="298" y="36" width="2" height="2" fill="#7a7a7a"/><rect x="298" y="41" width="2" height="2" fill="#7a7a7a"/><rect x="298" y="46" width="2" height="2" fill="#7a7a7a"/><rect x="298" y="51" width="2" height="2" fill="#7a7a7a"/><rect x="298" y="56" width="2" height="2" fill="#7a7a7a"/><path d="M315 12 L317.5 11.5 L335 36 L331 38 Z" fill="#e8e8e8" stroke="#6a6a6a" stroke-width="0.9"/><path d="M349 12 L346.5 11.5 L329 36 L333 38 Z" fill="#f2f2f2" stroke="#6a6a6a" stroke-width="0.9"/><circle cx="332" cy="30.5" r="2.2" fill="#d8d8d8" stroke="#555" stroke-width="0.8"/><path d="M331 34.5 Q322 31 317 38 Q313 45.5 319.5 47 Q326 48 330.5 40 Z" fill="none" stroke="#7e1a10" stroke-width="3.8"/><path d="M333 34.5 Q342 31 347 38 Q351 45.5 344.5 47 Q338 48 333.5 40 Z" fill="none" stroke="#7a2a10" stroke-width="3.8"/><path d="M373.5 11.5 H387 L394 18.5 V34.5 H373.5 Z" fill="#f6f6f6" stroke="#555"/><path d="M386.5 11.5 V19 H394" fill="#ddd" stroke="#777"/><rect x="377" y="17" width="9" height="1.4" fill="#aaa"/><rect x="377" y="21" width="13" height="1.4" fill="#aaa"/><rect x="377" y="25" width="13" height="1.4" fill="#aaa"/><rect x="377" y="29" width="13" height="1.4" fill="#aaa"/><path d="M385.5 25.5 H399 L406.5 33 V48.5 H385.5 Z" fill="#f6f6f6" stroke="#555"/><path d="M398.5 25.5 V33.5 H406" fill="#ddd" stroke="#777"/><rect x="389" y="34" width="14" height="1.4" fill="#aaa"/><rect x="389" y="38" width="14" height="1.4" fill="#aaa"/><rect x="389" y="42" width="14" height="1.4" fill="#aaa"/><rect x="431.5" y="15.5" width="27" height="29" rx="1.5" fill="url(#gClip)" stroke="#7a5020"/><path d="M437 17 Q437 14 440 14 H444 Q444 11 445.5 11 Q447 11 447 14 H451 Q454 14 454 17 V19 H437 Z" fill="#d8d8d8" stroke="#666" stroke-width="0.8"/><path d="M443.5 26.5 H456 L463.5 34 V48.5 H443.5 Z" fill="#f8f8f8" stroke="#555"/><path d="M455.5 26.5 V34.5 H463" fill="#ddd" stroke="#777"/><rect x="447" y="35" width="13" height="1.4" fill="#aaa"/><rect x="447" y="39" width="13" height="1.4" fill="#aaa"/><rect x="447" y="43" width="13" height="1.4" fill="#aaa"/><ellipse cx="503" cy="45.2" rx="12" ry="2.4" fill="#5a6cf0" opacity="0.85"/><path d="M487 32.1 L510.5 42 L508 43.8 Q503 45 498.9 44.4 L491 38 Q487.5 35 487 32.1 Z" fill="#5c6ef2" stroke="#1a2a70" stroke-width="0.9"/><path d="M500.4 20.5 L515.8 36.8 L510.5 42 L487 32.1 Z" fill="#b8780e" stroke="#5a3a08" stroke-width="0.8"/><path d="M495 25.5 L513 39 M492 29 L509 41 M498 22.5 L515 37" stroke="#8a5208" stroke-width="0.8" opacity="0.7"/><path d="M500.4 20.5 L503.3 16.7 Q505 15.8 507 16.3 L512 17.9 L517.8 12.7 Q522 11 525.4 15 Q527 18 524 21 L520.2 25.5 Q523 29 521.3 31.3 L517.8 37.1 L515.8 36.8 Z" fill="#e4e4e4" stroke="#3a3a3a" stroke-width="1"/><path d="M503 18.5 L517 34" stroke="#fafafa" stroke-width="2"/><rect x="542" y="6" width="2" height="2" fill="#7a7a7a"/><rect x="542" y="11" width="2" height="2" fill="#7a7a7a"/><rect x="542" y="16" width="2" height="2" fill="#7a7a7a"/><rect x="542" y="21" width="2" height="2" fill="#7a7a7a"/><rect x="542" y="26" width="2" height="2" fill="#7a7a7a"/><rect x="542" y="31" width="2" height="2" fill="#7a7a7a"/><rect x="542" y="36" width="2" height="2" fill="#7a7a7a"/><rect x="542" y="41" width="2" height="2" fill="#7a7a7a"/><rect x="542" y="46" width="2" height="2" fill="#7a7a7a"/><rect x="542" y="51" width="2" height="2" fill="#7a7a7a"/><rect x="542" y="56" width="2" height="2" fill="#7a7a7a"/><path d="M556.2 18.2 V41.8 H579.4 L571.4 32.8 C575 27.5 579 25.5 582 26 C587 27 589 31 588 35 C587.5 38 586 40 584.7 41.8 L586.6 43.6 C593 38 596 34 595.2 28 C594 20 587 15.5 579.1 16 C572 16.5 567 20 563.6 24.4 Z" fill="url(#gUndo)" stroke="#7a4a18" stroke-width="1"/><path d="M607 27 H616 L611.5 33 Z" fill="#111"/><path d="M671.8 18.2 V41.8 H648.6 L656.6 32.8 C653 27.5 649 25.5 646 26 C641 27 639 31 640 35 C640.5 38 642 40 643.3 41.8 L641.4 43.6 C635 38 632 34 632.8 28 C634 20 641 15.5 648.9 16 C656 16.5 661 20 664.4 24.4 Z" fill="#d6e3ef" stroke="#a6bcd4" stroke-width="1"/><path d="M682 27 H692 L687 33 Z" fill="#8e8e8e"/><rect x="706" y="6" width="2" height="2" fill="#7a7a7a"/><rect x="706" y="11" width="2" height="2" fill="#7a7a7a"/><rect x="706" y="16" width="2" height="2" fill="#7a7a7a"/><rect x="706" y="21" width="2" height="2" fill="#7a7a7a"/><rect x="706" y="26" width="2" height="2" fill="#7a7a7a"/><rect x="706" y="31" width="2" height="2" fill="#7a7a7a"/><rect x="706" y="36" width="2" height="2" fill="#7a7a7a"/><rect x="706" y="41" width="2" height="2" fill="#7a7a7a"/><rect x="706" y="46" width="2" height="2" fill="#7a7a7a"/><rect x="706" y="51" width="2" height="2" fill="#7a7a7a"/><rect x="706" y="56" width="2" height="2" fill="#7a7a7a"/><path d="M730 14.5 H751.5 V21 H749 Q748 17.5 745 17.5 H737 L745 30 L736 42 H746 Q749 42 750 38.5 H752 V45.5 H730 L740.5 30.5 Z" fill="#a8d0ee" stroke="#6a9cc8" stroke-width="1"/><path d="M770 27 H780 L775 33 Z" fill="#8e8e8e"/><text x="796.5" y="29" font-family="Liberation Serif" font-weight="700" font-size="24" fill="#d6ae76">A</text><text x="797.5" y="47.5" font-family="Liberation Serif" font-weight="700" font-size="23" fill="#7a9cc6">Z</text><path d="M822.5 20 V33.5 H816 L826 44 L836 33.5 H829.5 V20 Z" fill="#f0f0f0" stroke="#b4b4b4" stroke-width="1"/><path d="M846 27 H856 L851 33 Z" fill="#8e8e8e"/><path d="M872 15.5 L887.5 31 V44 Q892 46.5 896.5 44 V31 L912 15.5 Z" fill="url(#gFun)" stroke="#a4a4a4" stroke-width="1"/><ellipse cx="892" cy="15.5" rx="20" ry="3.2" fill="#dcdcdc" stroke="#a0a0a0"/><ellipse cx="892" cy="15.8" rx="17" ry="2" fill="#bdbdbd"/><rect x="900.5" y="32" width="11.5" height="3.3" fill="#8ab4dc"/><rect x="900.5" y="38.5" width="11.5" height="3.3" fill="#8ab4dc"/><path d="M922 27 H932 L927 33 Z" fill="#8e8e8e"/><rect x="946" y="6" width="2" height="2" fill="#7a7a7a"/><rect x="946" y="11" width="2" height="2" fill="#7a7a7a"/><rect x="946" y="16" width="2" height="2" fill="#7a7a7a"/><rect x="946" y="21" width="2" height="2" fill="#7a7a7a"/><rect x="946" y="26" width="2" height="2" fill="#7a7a7a"/><rect x="946" y="31" width="2" height="2" fill="#7a7a7a"/><rect x="946" y="36" width="2" height="2" fill="#7a7a7a"/><rect x="946" y="41" width="2" height="2" fill="#7a7a7a"/><rect x="946" y="46" width="2" height="2" fill="#7a7a7a"/><rect x="946" y="51" width="2" height="2" fill="#7a7a7a"/><rect x="946" y="56" width="2" height="2" fill="#7a7a7a"/><rect x="955" y="5" width="50" height="50" rx="6" fill="url(#gBtn)" stroke="#8a8a8a" stroke-width="2"/><path d="M998.8 12.9 V46.6 H978 A16.85 16.85 0 0 1 978 12.9 Z" fill="url(#gFx)" stroke="#3e7a32" stroke-width="1"/><text x="972" y="39.5" font-family="Liberation Serif" font-style="italic" font-size="26" letter-spacing="-0.5" fill="#1a1a1a">fx</text><rect x="1023.5" y="13.5" width="30" height="33" rx="1.5" fill="#f4f4f4" stroke="#666"/><rect x="1024" y="14" width="29" height="5" fill="#c8c8c8"/><circle cx="1028" cy="16.5" r="1.6" fill="#d33"/><rect x="1024" y="19" width="10" height="9" fill="#a8ccf0" stroke="#6a8ab8" stroke-width="0.8"/><circle cx="1029" cy="23.5" r="1.3" fill="#333"/><circle cx="1039" cy="23.5" r="1.3" fill="#333"/><circle cx="1049" cy="23.5" r="1.3" fill="#333"/><path d="M1024 29 H1053 M1024 34.5 H1053 M1024 40 H1053" stroke="#999" stroke-width="1"/><rect x="1076.5" y="22.5" width="19" height="19" fill="#8cb6ea" stroke="#3a64a8"/><rect x="1086" y="12" width="24" height="17.5" rx="1" fill="#111"/><rect x="1091.5" y="13.5" width="13" height="14.5" fill="#5aa6e6"/><rect x="1087.5" y="14.5" width="2.2" height="2.2" fill="#f0f0f0"/><rect x="1087.5" y="19" width="2.2" height="2.2" fill="#f0f0f0"/><rect x="1087.5" y="23.5" width="2.2" height="2.2" fill="#f0f0f0"/><rect x="1106.3" y="14.5" width="2.2" height="2.2" fill="#f0f0f0"/><rect x="1106.3" y="19" width="2.2" height="2.2" fill="#f0f0f0"/><rect x="1106.3" y="23.5" width="2.2" height="2.2" fill="#f0f0f0"/><path d="M1101 27 L1114.7 24 V42 L1112.5 42 V29.5 L1103.2 31.5 V44 L1101 44 Z" fill="#1a4e9e"/><ellipse cx="1098.3" cy="44.3" rx="4.4" ry="3.3" transform="rotate(-18 1098.3 44.3)" fill="#1a58b0"/><ellipse cx="1110.3" cy="42.3" rx="4.4" ry="3.3" transform="rotate(-18 1110.3 42.3)" fill="#1a58b0"/><rect x="1136.5" y="12.5" width="98" height="36" fill="#f0f0f0" stroke="#9a9a9a"/><rect x="1206" y="13" width="28" height="35" fill="url(#gZd)"/><path d="M1206.5 13 V48" stroke="#c8c8c8"/><path d="M1214.5 27 H1225.5 L1220 33 Z" fill="#333"/><text x="1140.5" y="39.5" font-family="Liberation Sans" font-size="24" fill="#000">87%</text><rect x="1250" y="6" width="2" height="2" fill="#7a7a7a"/><rect x="1250" y="11" width="2" height="2" fill="#7a7a7a"/><rect x="1250" y="16" width="2" height="2" fill="#7a7a7a"/><rect x="1250" y="21" width="2" height="2" fill="#7a7a7a"/><rect x="1250" y="26" width="2" height="2" fill="#7a7a7a"/><rect x="1250" y="31" width="2" height="2" fill="#7a7a7a"/><rect x="1250" y="36" width="2" height="2" fill="#7a7a7a"/><rect x="1250" y="41" width="2" height="2" fill="#7a7a7a"/><rect x="1250" y="46" width="2" height="2" fill="#7a7a7a"/><rect x="1250" y="51" width="2" height="2" fill="#7a7a7a"/><rect x="1250" y="56" width="2" height="2" fill="#7a7a7a"/><circle cx="1284" cy="30" r="18.5" fill="#f4f4f4" stroke="#777" stroke-width="1"/><circle cx="1284" cy="30" r="15" fill="url(#gHelp)"/><text x="1284" y="39" text-anchor="middle" font-family="Liberation Sans" font-weight="700" font-size="24" fill="#fff">?</text><rect x="2020.5" y="10.5" width="526" height="40" rx="20" fill="url(#gSearch)" stroke="#7a7a7a" stroke-width="1.2"/><path d="M2086 12 H2526 Q2545 12 2545 30.5 Q2545 49 2526 49 H2086 Q2084 30 2086 12 Z" fill="#efefef" stroke="#9a9a9a" stroke-width="1"/><circle cx="2042" cy="27" r="7" fill="none" stroke="#222" stroke-width="3.6"/><path d="M2047 32 L2055 40" stroke="#222" stroke-width="4" stroke-linecap="round"/><path d="M2058 27 H2071 L2064.5 34 Z" fill="#222"/><text x="2102" y="40" font-family="Liberation Sans" font-size="24" letter-spacing="0.55" fill="#b2b2b2">Auf dem Blatt suchen</text><path d="M2552 0 H2560 V8 Z" fill="#111"/><path d="M0 0 H8 L0 8 Z" fill="#111"/></svg>
<div style="left:174px;top:65px;width:1px;height:38px;background:#8fa88b;"></div>
<div style="left:175px;top:65px;width:1px;height:38px;background:#dbe7d8;"></div>
<div style="left:312px;top:65px;width:1px;height:38px;background:#8fa88b;"></div>
<div style="left:313px;top:65px;width:1px;height:38px;background:#dbe7d8;"></div>
<div style="left:471px;top:65px;width:1px;height:38px;background:#8fa88b;"></div>
<div style="left:472px;top:65px;width:1px;height:38px;background:#dbe7d8;"></div>
<div style="left:661px;top:65px;width:1px;height:38px;background:#8fa88b;"></div>
<div style="left:662px;top:65px;width:1px;height:38px;background:#dbe7d8;"></div>
<div style="left:827px;top:65px;width:1px;height:38px;background:#8fa88b;"></div>
<div style="left:828px;top:65px;width:1px;height:38px;background:#dbe7d8;"></div>
<div style="left:981px;top:65px;width:1px;height:38px;background:#8fa88b;"></div>
<div style="left:982px;top:65px;width:1px;height:38px;background:#dbe7d8;"></div>
<div style="left:1109px;top:65px;width:1px;height:38px;background:#8fa88b;"></div>
<div style="left:1110px;top:65px;width:1px;height:38px;background:#dbe7d8;"></div>
<div style="left:1301px;top:65px;width:1px;height:38px;background:#8fa88b;"></div>
<div style="left:1302px;top:65px;width:1px;height:38px;background:#dbe7d8;"></div>
<svg style="position:absolute;left:50px;top:72px" width="26" height="24"><path d="M2 12 L12 2.5 L22 12 H18.5 V21 H14 V15 H10 V21 H5.5 V12 Z" fill="#222"/></svg>
<svg style="position:absolute;left:2440px;top:64px" width="120" height="40"><path d="M25.7 15.7 L34 25.2 L42.5 15.7" fill="none" stroke="#555" stroke-width="4.2" stroke-linecap="round" stroke-linejoin="round"/><g transform="translate(79.8,20.3)"><circle r="9.6" fill="#555"/><path d="M-2.8 -12.6 H2.8 L3.6 -7 H-3.6 Z" fill="#555" transform="rotate(0)"/><path d="M-2.8 -12.6 H2.8 L3.6 -7 H-3.6 Z" fill="#555" transform="rotate(45)"/><path d="M-2.8 -12.6 H2.8 L3.6 -7 H-3.6 Z" fill="#555" transform="rotate(90)"/><path d="M-2.8 -12.6 H2.8 L3.6 -7 H-3.6 Z" fill="#555" transform="rotate(135)"/><path d="M-2.8 -12.6 H2.8 L3.6 -7 H-3.6 Z" fill="#555" transform="rotate(180)"/><path d="M-2.8 -12.6 H2.8 L3.6 -7 H-3.6 Z" fill="#555" transform="rotate(225)"/><path d="M-2.8 -12.6 H2.8 L3.6 -7 H-3.6 Z" fill="#555" transform="rotate(270)"/><path d="M-2.8 -12.6 H2.8 L3.6 -7 H-3.6 Z" fill="#555" transform="rotate(315)"/><circle r="4" fill="#c2d5bf"/></g><path d="M99 16 H111 L105 24.3 Z" fill="#555"/></svg>
<div style="left:2446px;top:68px;width:2px;height:32px;background:linear-gradient(#9bb497,#8aa486);"></div>
<div class="t" style="left:91.7px;top:73.58px;font-size:22px;line-height:22px;font-weight:700;color:#1e1e1e;letter-spacing:0.84px;text-shadow:0 1px 0 rgba(255,255,255,0.55);">Start</div>
<div class="t" style="left:206px;top:73.58px;font-size:22px;line-height:22px;font-weight:700;color:#1e1e1e;letter-spacing:0.3px;text-shadow:0 1px 0 rgba(255,255,255,0.55);">Layout</div>
<div class="t" style="left:344px;top:73.58px;font-size:22px;line-height:22px;font-weight:700;color:#1e1e1e;letter-spacing:0.64px;text-shadow:0 1px 0 rgba(255,255,255,0.55);">Tabellen</div>
<div class="t" style="left:502px;top:73.58px;font-size:22px;line-height:22px;font-weight:700;color:#1e1e1e;letter-spacing:0.64px;text-shadow:0 1px 0 rgba(255,255,255,0.55);">Diagramme</div>
<div class="t" style="left:692px;top:73.58px;font-size:22px;line-height:22px;font-weight:700;color:#1e1e1e;letter-spacing:0.86px;text-shadow:0 1px 0 rgba(255,255,255,0.55);">SmartArt</div>
<div class="t" style="left:858.5px;top:73.58px;font-size:22px;line-height:22px;font-weight:700;color:#1e1e1e;letter-spacing:0.24px;text-shadow:0 1px 0 rgba(255,255,255,0.55);">Formeln</div>
<div class="t" style="left:1012px;top:73.58px;font-size:22px;line-height:22px;font-weight:700;color:#1e1e1e;letter-spacing:0.38px;text-shadow:0 1px 0 rgba(255,255,255,0.55);">Daten</div>
<div class="t" style="left:1140px;top:73.58px;font-size:22px;line-height:22px;font-weight:700;color:#1e1e1e;letter-spacing:0.74px;text-shadow:0 1px 0 rgba(255,255,255,0.55);">Überprüfen</div>
<div style="left:231px;top:106px;width:2px;height:33px;background:#a8a8a8;"></div>
<div style="left:233px;top:106px;width:33px;height:33px;background:linear-gradient(#e6e6e6,#d6d6d6);"></div>
<div style="left:266px;top:106px;width:2px;height:33px;background:#a8a8a8;"></div>
<div style="left:268px;top:106px;width:196px;height:33px;background:linear-gradient(#e4e4e4,#d8d8d8);"></div>
<div style="left:464px;top:106px;width:2px;height:33px;background:#a0a0a0;"></div>
<div class="t" style="left:103px;top:111.88px;font-size:24px;line-height:24px;font-weight:400;color:#000;letter-spacing:0.6px;">B2</div>
<svg style="position:absolute;left:233px;top:104px" width="232" height="35"><path d="M10.5 19 L15 11 L19.5 19 Z M10.5 22 L15 30 L19.5 22 Z" fill="#222"/><circle cx="68" cy="18" r="12" fill="#a6a6a6"/><path d="M62 12 L74 24 M74 12 L62 24" stroke="#f2f2f2" stroke-width="3.4"/><circle cx="114" cy="18" r="12" fill="#a6a6a6"/><path d="M107 18 L112 23 L121 13" fill="none" stroke="#f2f2f2" stroke-width="3.4"/><path d="M156 6 Q143 18 156 31" fill="none" stroke="#bbb" stroke-width="1.4"/><ellipse cx="166" cy="18" rx="8" ry="6.5" fill="#c4c4c4"/><rect x="157" y="17" width="18" height="2" fill="#e8e8e8"/><text x="196" y="28" font-family="Liberation Serif" font-style="italic" font-size="26" fill="#222">fx</text></svg>
<div class="t" style="left:485px;top:111.88px;font-size:24px;line-height:24px;font-weight:400;color:#000;letter-spacing:1.0px;">Betriebskostenabrechnung 2015</div>
<div style="left:2528px;top:106px;width:1px;height:33px;background:#9a9a9a;"></div>
<svg style="position:absolute;left:2535px;top:112px" width="24" height="20"><path d="M2 8 H18 L10 16 Z" fill="#222"/></svg>
<svg style="position:absolute;left:2530px;top:146px" width="30" height="30"><path d="M5 8 H24 M5 14 H24" stroke="#8a8a8a" stroke-width="2"/></svg>
<div style="left:2530px;top:168px;width:30px;height:2px;background:#9a9a9a;"></div>
<div style="left:2538px;top:172px;width:16px;height:753px;background:#bdbdbd;border-radius:8px;"></div>
<div style="left:2506px;top:762px;width:72px;height:72px;border-radius:50%;background:#0b7ae0;box-shadow:-2px 3px 6px rgba(0,0,0,0.35);"></div>
<svg style="position:absolute;left:2518px;top:776px" width="42" height="44"><g fill="#f2f2f2"><path d="M4.4 11 L14.4 3.5 L24.4 11 L14.4 18.5 Z"/><path d="M24.4 11 L34.4 3.5 L44.4 11 L34.4 18.5 Z"/><path d="M4.4 25 L14.4 18.5 L24.4 25 L14.4 31.5 Z"/><path d="M24.4 25 L34.4 18.5 L44.4 25 L34.4 31.5 Z"/><path d="M12.5 34 L24 27.5 L35.5 34 L24 40.5 Z"/></g><path d="M11 31 L24 39 L37 31" fill="none" stroke="#0b7ae0" stroke-width="1.6"/></svg>
<div style="left:0px;top:1533px;width:130px;height:67px;background:#ececec;"></div>
<div style="left:130px;top:1533px;width:2px;height:67px;background:#a4a4a4;"></div>
<div style="left:6px;top:1540px;width:118px;height:48px;box-sizing:border-box;border:1.5px solid #5a5a5a;border-radius:7px;background:linear-gradient(#f2f2f2,#d0d0d0);overflow:hidden"><div style="left:57px;top:0;width:61px;height:48px;background:linear-gradient(#3e3e3e,#6a6a6a);"></div></div>
<svg style="position:absolute;left:0;top:1540px" width="130" height="48"><rect x="23" y="13" width="28" height="22" fill="none" stroke="#444" stroke-width="2"/><rect x="26" y="16" width="4" height="4" fill="#333"/><rect x="26" y="22" width="4" height="4" fill="#333"/><rect x="26" y="28" width="4" height="4" fill="#333"/><rect x="32" y="16" width="4" height="4" fill="#333"/><rect x="32" y="22" width="4" height="4" fill="#333"/><rect x="32" y="28" width="4" height="4" fill="#333"/><rect x="38" y="16" width="4" height="4" fill="#333"/><rect x="38" y="22" width="4" height="4" fill="#333"/><rect x="38" y="28" width="4" height="4" fill="#333"/><rect x="44" y="16" width="4" height="4" fill="#333"/><rect x="44" y="22" width="4" height="4" fill="#333"/><rect x="44" y="28" width="4" height="4" fill="#333"/><rect x="74.5" y="12.5" width="17" height="23" rx="1" fill="none" stroke="#4aa8f0" stroke-width="1.6"/><rect x="96.5" y="12.5" width="17" height="23" rx="1" fill="none" stroke="#4aa8f0" stroke-width="1.6"/><rect x="78" y="16" width="4" height="4" fill="#4aa8f0"/><rect x="78" y="22" width="4" height="4" fill="#4aa8f0"/><rect x="78" y="28" width="4" height="4" fill="#4aa8f0"/><rect x="84" y="16" width="4" height="4" fill="#4aa8f0"/><rect x="84" y="22" width="4" height="4" fill="#4aa8f0"/><rect x="84" y="28" width="4" height="4" fill="#4aa8f0"/><rect x="100" y="16" width="4" height="4" fill="#4aa8f0"/><rect x="100" y="22" width="4" height="4" fill="#4aa8f0"/><rect x="100" y="28" width="4" height="4" fill="#4aa8f0"/><rect x="106" y="16" width="4" height="4" fill="#4aa8f0"/><rect x="106" y="22" width="4" height="4" fill="#4aa8f0"/><rect x="106" y="28" width="4" height="4" fill="#4aa8f0"/></svg>
<div style="left:132px;top:1533px;width:132px;height:29px;background:linear-gradient(#f4f4f4,#e2e2e2);"></div>
<svg style="position:absolute;left:132px;top:1533px" width="132" height="29"><rect x="0" y="10" width="132" height="6" fill="#e2e2e2"/><rect x="14.5" y="5.5" width="3" height="13" fill="#a0a0a0"/><path d="M32.3 5.5 V18.5 L21.3 12 Z" fill="#a0a0a0"/><path d="M55.4 5.5 V18.5 L44.4 12 Z" fill="#a0a0a0"/><path d="M75.7 5.5 V18.5 L87.3 12 Z" fill="#3a3a3a"/><path d="M100 5.5 V18.5 L110.4 12 Z" fill="#3a3a3a"/><rect x="114" y="5.5" width="3.5" height="13" fill="#3a3a3a"/></svg>
<div style="left:264px;top:1533px;width:1847px;height:29px;background:#8fa0b8;"></div>
<div style="left:132px;top:1562px;width:2398px;height:3px;background:#9a9a9a;"></div>
<svg style="position:absolute;left:0;top:0" width="0" height="0"><defs><linearGradient id="lockg" x1="0" y1="0" x2="0" y2="1"><stop offset="0" stop-color="#f2c46a"/><stop offset="1" stop-color="#c9782a"/></linearGradient><linearGradient id="tabY" x1="0" y1="0" x2="0" y2="1"><stop offset="0" stop-color="#f8df86"/><stop offset="0.35" stop-color="#f3cc4a"/><stop offset="1" stop-color="#eebd36"/></linearGradient><linearGradient id="tabYs" x1="0" y1="0" x2="0" y2="1"><stop offset="0" stop-color="#fbe9a8"/><stop offset="0.4" stop-color="#f6d867"/><stop offset="1" stop-color="#f0c84a"/></linearGradient><linearGradient id="tabB" x1="0" y1="0" x2="0" y2="1"><stop offset="0" stop-color="#4aa2e6"/><stop offset="1" stop-color="#2484d0"/></linearGradient><linearGradient id="tabR" x1="0" y1="0" x2="0" y2="1"><stop offset="0" stop-color="#f25d4c"/><stop offset="1" stop-color="#ea4636"/></linearGradient></defs></svg>
<svg style="position:absolute;left:288px;top:1530px" width="205" height="32"><path d="M0.5 1.5 H204 V16 L191 29.5 H6 Q0.5 29.5 0.5 24 Z" fill="url(#tabYs)" stroke="#b89a30" stroke-width="1"/></svg>
<svg style="position:absolute;left:492px;top:1530px" width="136" height="32"><path d="M0.5 1.5 H135 V16 L122 29.5 H6 Q0.5 29.5 0.5 24 Z" fill="url(#tabY)" stroke="#b89a30" stroke-width="1"/></svg>
<svg style="position:absolute;left:627px;top:1530px" width="131" height="32"><path d="M0.5 1.5 H130 V16 L117 29.5 H6 Q0.5 29.5 0.5 24 Z" fill="url(#tabY)" stroke="#b89a30" stroke-width="1"/></svg>
<svg style="position:absolute;left:757px;top:1530px" width="180" height="32"><path d="M0.5 1.5 H179 V16 L166 29.5 H6 Q0.5 29.5 0.5 24 Z" fill="url(#tabB)" stroke="#1a5ea8" stroke-width="1"/></svg>
<svg style="position:absolute;left:936px;top:1530px" width="103" height="32"><path d="M0.5 1.5 H102 V16 L89 29.5 H6 Q0.5 29.5 0.5 24 Z" fill="url(#tabR)" stroke="#b82a1c" stroke-width="1"/></svg>
<svg style="position:absolute;left:1038px;top:1530px" width="102" height="32"><path d="M0.5 1.5 H101 V16 L88 29.5 H6 Q0.5 29.5 0.5 24 Z" fill="url(#tabR)" stroke="#b82a1c" stroke-width="1"/></svg>
<svg style="position:absolute;left:1139px;top:1530px" width="103" height="32"><path d="M0.5 1.5 H102 V16 L89 29.5 H6 Q0.5 29.5 0.5 24 Z" fill="url(#tabR)" stroke="#b82a1c" stroke-width="1"/></svg>
<svg style="position:absolute;left:1241px;top:1530px" width="103" height="32"><path d="M0.5 1.5 H102 V16 L89 29.5 H6 Q0.5 29.5 0.5 24 Z" fill="url(#tabR)" stroke="#b82a1c" stroke-width="1"/></svg>
<svg style="position:absolute;left:1343px;top:1530px" width="102" height="32"><path d="M0.5 1.5 H101 V16 L88 29.5 H6 Q0.5 29.5 0.5 24 Z" fill="url(#tabR)" stroke="#b82a1c" stroke-width="1"/></svg>
<svg style="position:absolute;left:1444px;top:1530px" width="103" height="32"><path d="M0.5 1.5 H102 V16 L89 29.5 H6 Q0.5 29.5 0.5 24 Z" fill="url(#tabR)" stroke="#b82a1c" stroke-width="1"/></svg>
<svg style="position:absolute;left:1546px;top:1530px" width="103" height="32"><path d="M0.5 1.5 H102 V16 L89 29.5 H6 Q0.5 29.5 0.5 24 Z" fill="url(#tabR)" stroke="#b82a1c" stroke-width="1"/></svg>
<svg style="position:absolute;left:1648px;top:1530px" width="102" height="32"><path d="M0.5 1.5 H101 V16 L88 29.5 H6 Q0.5 29.5 0.5 24 Z" fill="url(#tabR)" stroke="#b82a1c" stroke-width="1"/></svg>
<svg style="position:absolute;left:1749px;top:1530px" width="103" height="32"><path d="M0.5 1.5 H102 V16 L89 29.5 H6 Q0.5 29.5 0.5 24 Z" fill="url(#tabR)" stroke="#b82a1c" stroke-width="1"/></svg>
<svg style="position:absolute;left:1851px;top:1530px" width="102" height="32"><path d="M0.5 1.5 H101 V16 L88 29.5 H6 Q0.5 29.5 0.5 24 Z" fill="url(#tabR)" stroke="#b82a1c" stroke-width="1"/></svg>
<svg style="position:absolute;left:1952px;top:1530px" width="103" height="32"><path d="M0.5 1.5 H102 V16 L89 29.5 H6 Q0.5 29.5 0.5 24 Z" fill="url(#tabR)" stroke="#b82a1c" stroke-width="1"/></svg>
<svg style="position:absolute;left:2054px;top:1530px" width="103" height="32"><path d="M0.5 1.5 H102 V16 L89 29.5 H6 Q0.5 29.5 0.5 24 Z" fill="url(#tabR)" stroke="#b82a1c" stroke-width="1"/></svg>
<div class="t" style="left:303px;top:1532.38px;font-size:22px;line-height:22px;font-weight:700;color:#000;text-shadow:0 1px 0 rgba(255,255,255,0.5);transform:scaleX(0.965);transform-origin:0 0;">STAMMDATEN</div>
<div class="t" style="left:509px;top:1533.22px;font-size:21px;line-height:21px;font-weight:400;color:#000;text-shadow:0 1px 0 rgba(255,255,255,0.5);transform:scaleX(0.867);transform-origin:0 0;">KOSTEN</div>
<div class="t" style="left:647px;top:1533.22px;font-size:21px;line-height:21px;font-weight:400;color:#000;text-shadow:0 1px 0 rgba(255,255,255,0.5);transform:scaleX(0.863);transform-origin:0 0;">MIETER</div>
<div class="t" style="left:776px;top:1533.22px;font-size:21px;line-height:21px;font-weight:400;color:#fff;text-shadow:0 1.5px 0 #222;transform:scaleX(0.872);transform-origin:0 0;">PRÜFUNGEN</div>
<svg style="position:absolute;left:456px;top:1531px" width="22" height="27"><path d="M5 13 V8 Q5 2.5 10.5 2.5 Q16 2.5 16 8 V13" fill="none" stroke="#b8b8b8" stroke-width="3"/><path d="M5 13 V8 Q5 2.5 10.5 2.5 Q16 2.5 16 8 V13" fill="none" stroke="#e8e8e8" stroke-width="1.2"/><rect x="0.5" y="12.5" width="20" height="12" rx="1" fill="url(#lockg)" stroke="#9a5a1a" stroke-width="1"/><path d="M2 16.5 H19 M2 20.5 H19" stroke="#c88a3a" stroke-width="0.8"/></svg>
<svg style="position:absolute;left:590px;top:1531px" width="22" height="27"><path d="M5 13 V8 Q5 2.5 10.5 2.5 Q16 2.5 16 8 V13" fill="none" stroke="#b8b8b8" stroke-width="3"/><path d="M5 13 V8 Q5 2.5 10.5 2.5 Q16 2.5 16 8 V13" fill="none" stroke="#e8e8e8" stroke-width="1.2"/><rect x="0.5" y="12.5" width="20" height="12" rx="1" fill="url(#lockg)" stroke="#9a5a1a" stroke-width="1"/><path d="M2 16.5 H19 M2 20.5 H19" stroke="#c88a3a" stroke-width="0.8"/></svg>
<svg style="position:absolute;left:720px;top:1531px" width="22" height="27"><path d="M5 13 V8 Q5 2.5 10.5 2.5 Q16 2.5 16 8 V13" fill="none" stroke="#b8b8b8" stroke-width="3"/><path d="M5 13 V8 Q5 2.5 10.5 2.5 Q16 2.5 16 8 V13" fill="none" stroke="#e8e8e8" stroke-width="1.2"/><rect x="0.5" y="12.5" width="20" height="12" rx="1" fill="url(#lockg)" stroke="#9a5a1a" stroke-width="1"/><path d="M2 16.5 H19 M2 20.5 H19" stroke="#c88a3a" stroke-width="0.8"/></svg>
<svg style="position:absolute;left:898px;top:1531px" width="22" height="27"><path d="M5 13 V8 Q5 2.5 10.5 2.5 Q16 2.5 16 8 V13" fill="none" stroke="#b8b8b8" stroke-width="3"/><path d="M5 13 V8 Q5 2.5 10.5 2.5 Q16 2.5 16 8 V13" fill="none" stroke="#e8e8e8" stroke-width="1.2"/><rect x="0.5" y="12.5" width="20" height="12" rx="1" fill="url(#lockg)" stroke="#9a5a1a" stroke-width="1"/><path d="M2 16.5 H19 M2 20.5 H19" stroke="#c88a3a" stroke-width="0.8"/></svg>
<div class="t" style="left:964px;top:1533.22px;font-size:21px;line-height:21px;font-weight:400;color:#fff;text-shadow:0 1.5px 0 #222;transform:scaleX(0.85);transform-origin:0 0;">E1</div>
<svg style="position:absolute;left:990px;top:1531px" width="22" height="27"><path d="M5 13 V8 Q5 2.5 10.5 2.5 Q16 2.5 16 8 V13" fill="none" stroke="#b8b8b8" stroke-width="3"/><path d="M5 13 V8 Q5 2.5 10.5 2.5 Q16 2.5 16 8 V13" fill="none" stroke="#e8e8e8" stroke-width="1.2"/><rect x="0.5" y="12.5" width="20" height="12" rx="1" fill="url(#lockg)" stroke="#9a5a1a" stroke-width="1"/><path d="M2 16.5 H19 M2 20.5 H19" stroke="#c88a3a" stroke-width="0.8"/></svg>
<div class="t" style="left:1066px;top:1533.22px;font-size:21px;line-height:21px;font-weight:400;color:#fff;text-shadow:0 1.5px 0 #222;transform:scaleX(0.85);transform-origin:0 0;">E2</div>
<svg style="position:absolute;left:1092px;top:1531px" width="22" height="27"><path d="M5 13 V8 Q5 2.5 10.5 2.5 Q16 2.5 16 8 V13" fill="none" stroke="#b8b8b8" stroke-width="3"/><path d="M5 13 V8 Q5 2.5 10.5 2.5 Q16 2.5 16 8 V13" fill="none" stroke="#e8e8e8" stroke-width="1.2"/><rect x="0.5" y="12.5" width="20" height="12" rx="1" fill="url(#lockg)" stroke="#9a5a1a" stroke-width="1"/><path d="M2 16.5 H19 M2 20.5 H19" stroke="#c88a3a" stroke-width="0.8"/></svg>
<div class="t" style="left:1167px;top:1533.22px;font-size:21px;line-height:21px;font-weight:400;color:#fff;text-shadow:0 1.5px 0 #222;transform:scaleX(0.85);transform-origin:0 0;">E3</div>
<svg style="position:absolute;left:1193px;top:1531px" width="22" height="27"><path d="M5 13 V8 Q5 2.5 10.5 2.5 Q16 2.5 16 8 V13" fill="none" stroke="#b8b8b8" stroke-width="3"/><path d="M5 13 V8 Q5 2.5 10.5 2.5 Q16 2.5 16 8 V13" fill="none" stroke="#e8e8e8" stroke-width="1.2"/><rect x="0.5" y="12.5" width="20" height="12" rx="1" fill="url(#lockg)" stroke="#9a5a1a" stroke-width="1"/><path d="M2 16.5 H19 M2 20.5 H19" stroke="#c88a3a" stroke-width="0.8"/></svg>
<div class="t" style="left:1269px;top:1533.22px;font-size:21px;line-height:21px;font-weight:400;color:#fff;text-shadow:0 1.5px 0 #222;transform:scaleX(0.85);transform-origin:0 0;">E4</div>
<svg style="position:absolute;left:1295px;top:1531px" width="22" height="27"><path d="M5 13 V8 Q5 2.5 10.5 2.5 Q16 2.5 16 8 V13" fill="none" stroke="#b8b8b8" stroke-width="3"/><path d="M5 13 V8 Q5 2.5 10.5 2.5 Q16 2.5 16 8 V13" fill="none" stroke="#e8e8e8" stroke-width="1.2"/><rect x="0.5" y="12.5" width="20" height="12" rx="1" fill="url(#lockg)" stroke="#9a5a1a" stroke-width="1"/><path d="M2 16.5 H19 M2 20.5 H19" stroke="#c88a3a" stroke-width="0.8"/></svg>
<div class="t" style="left:1371px;top:1533.22px;font-size:21px;line-height:21px;font-weight:400;color:#fff;text-shadow:0 1.5px 0 #222;transform:scaleX(0.85);transform-origin:0 0;">E5</div>
<svg style="position:absolute;left:1397px;top:1531px" width="22" height="27"><path d="M5 13 V8 Q5 2.5 10.5 2.5 Q16 2.5 16 8 V13" fill="none" stroke="#b8b8b8" stroke-width="3"/><path d="M5 13 V8 Q5 2.5 10.5 2.5 Q16 2.5 16 8 V13" fill="none" stroke="#e8e8e8" stroke-width="1.2"/><rect x="0.5" y="12.5" width="20" height="12" rx="1" fill="url(#lockg)" stroke="#9a5a1a" stroke-width="1"/><path d="M2 16.5 H19 M2 20.5 H19" stroke="#c88a3a" stroke-width="0.8"/></svg>
<div class="t" style="left:1472px;top:1533.22px;font-size:21px;line-height:21px;font-weight:400;color:#fff;text-shadow:0 1.5px 0 #222;transform:scaleX(0.85);transform-origin:0 0;">E6</div>
<svg style="position:absolute;left:1498px;top:1531px" width="22" height="27"><path d="M5 13 V8 Q5 2.5 10.5 2.5 Q16 2.5 16 8 V13" fill="none" stroke="#b8b8b8" stroke-width="3"/><path d="M5 13 V8 Q5 2.5 10.5 2.5 Q16 2.5 16 8 V13" fill="none" stroke="#e8e8e8" stroke-width="1.2"/><rect x="0.5" y="12.5" width="20" height="12" rx="1" fill="url(#lockg)" stroke="#9a5a1a" stroke-width="1"/><path d="M2 16.5 H19 M2 20.5 H19" stroke="#c88a3a" stroke-width="0.8"/></svg>
<div class="t" style="left:1574px;top:1533.22px;font-size:21px;line-height:21px;font-weight:400;color:#fff;text-shadow:0 1.5px 0 #222;transform:scaleX(0.85);transform-origin:0 0;">E7</div>
<svg style="position:absolute;left:1600px;top:1531px" width="22" height="27"><path d="M5 13 V8 Q5 2.5 10.5 2.5 Q16 2.5 16 8 V13" fill="none" stroke="#b8b8b8" stroke-width="3"/><path d="M5 13 V8 Q5 2.5 10.5 2.5 Q16 2.5 16 8 V13" fill="none" stroke="#e8e8e8" stroke-width="1.2"/><rect x="0.5" y="12.5" width="20" height="12" rx="1" fill="url(#lockg)" stroke="#9a5a1a" stroke-width="1"/><path d="M2 16.5 H19 M2 20.5 H19" stroke="#c88a3a" stroke-width="0.8"/></svg>
<div class="t" style="left:1676px;top:1533.22px;font-size:21px;line-height:21px;font-weight:400;color:#fff;text-shadow:0 1.5px 0 #222;transform:scaleX(0.85);transform-origin:0 0;">E8</div>
<svg style="position:absolute;left:1702px;top:1531px" width="22" height="27"><path d="M5 13 V8 Q5 2.5 10.5 2.5 Q16 2.5 16 8 V13" fill="none" stroke="#b8b8b8" stroke-width="3"/><path d="M5 13 V8 Q5 2.5 10.5 2.5 Q16 2.5 16 8 V13" fill="none" stroke="#e8e8e8" stroke-width="1.2"/><rect x="0.5" y="12.5" width="20" height="12" rx="1" fill="url(#lockg)" stroke="#9a5a1a" stroke-width="1"/><path d="M2 16.5 H19 M2 20.5 H19" stroke="#c88a3a" stroke-width="0.8"/></svg>
<div class="t" style="left:1777px;top:1533.22px;font-size:21px;line-height:21px;font-weight:400;color:#fff;text-shadow:0 1.5px 0 #222;transform:scaleX(0.85);transform-origin:0 0;">E9</div>
<svg style="position:absolute;left:1803px;top:1531px" width="22" height="27"><path d="M5 13 V8 Q5 2.5 10.5 2.5 Q16 2.5 16 8 V13" fill="none" stroke="#b8b8b8" stroke-width="3"/><path d="M5 13 V8 Q5 2.5 10.5 2.5 Q16 2.5 16 8 V13" fill="none" stroke="#e8e8e8" stroke-width="1.2"/><rect x="0.5" y="12.5" width="20" height="12" rx="1" fill="url(#lockg)" stroke="#9a5a1a" stroke-width="1"/><path d="M2 16.5 H19 M2 20.5 H19" stroke="#c88a3a" stroke-width="0.8"/></svg>
<div class="t" style="left:1874px;top:1533.22px;font-size:21px;line-height:21px;font-weight:400;color:#fff;text-shadow:0 1.5px 0 #222;transform:scaleX(0.85);transform-origin:0 0;">E10</div>
<svg style="position:absolute;left:1915px;top:1531px" width="22" height="27"><path d="M5 13 V8 Q5 2.5 10.5 2.5 Q16 2.5 16 8 V13" fill="none" stroke="#b8b8b8" stroke-width="3"/><path d="M5 13 V8 Q5 2.5 10.5 2.5 Q16 2.5 16 8 V13" fill="none" stroke="#e8e8e8" stroke-width="1.2"/><rect x="0.5" y="12.5" width="20" height="12" rx="1" fill="url(#lockg)" stroke="#9a5a1a" stroke-width="1"/><path d="M2 16.5 H19 M2 20.5 H19" stroke="#c88a3a" stroke-width="0.8"/></svg>
<div class="t" style="left:1975px;top:1533.22px;font-size:21px;line-height:21px;font-weight:400;color:#fff;text-shadow:0 1.5px 0 #222;transform:scaleX(0.85);transform-origin:0 0;">E11</div>
<svg style="position:absolute;left:2016px;top:1531px" width="22" height="27"><path d="M5 13 V8 Q5 2.5 10.5 2.5 Q16 2.5 16 8 V13" fill="none" stroke="#b8b8b8" stroke-width="3"/><path d="M5 13 V8 Q5 2.5 10.5 2.5 Q16 2.5 16 8 V13" fill="none" stroke="#e8e8e8" stroke-width="1.2"/><rect x="0.5" y="12.5" width="20" height="12" rx="1" fill="url(#lockg)" stroke="#9a5a1a" stroke-width="1"/><path d="M2 16.5 H19 M2 20.5 H19" stroke="#c88a3a" stroke-width="0.8"/></svg>
<div class="t" style="left:2077px;top:1533.22px;font-size:21px;line-height:21px;font-weight:400;color:#fff;text-shadow:0 1.5px 0 #222;transform:scaleX(0.85);transform-origin:0 0;">E12</div>
<svg style="position:absolute;left:2118px;top:1531px" width="22" height="27"><path d="M5 13 V8 Q5 2.5 10.5 2.5 Q16 2.5 16 8 V13" fill="none" stroke="#b8b8b8" stroke-width="3"/><path d="M5 13 V8 Q5 2.5 10.5 2.5 Q16 2.5 16 8 V13" fill="none" stroke="#e8e8e8" stroke-width="1.2"/><rect x="0.5" y="12.5" width="20" height="12" rx="1" fill="url(#lockg)" stroke="#9a5a1a" stroke-width="1"/><path d="M2 16.5 H19 M2 20.5 H19" stroke="#c88a3a" stroke-width="0.8"/></svg>
<div style="left:2111px;top:1530px;width:419px;height:32px;background:#efefef;"></div>
<div style="left:2111px;top:1530px;width:419px;height:2px;background:#9a9a9a;"></div>
<div style="left:2109px;top:1533px;width:3px;height:29px;background:#9a9a9a;"></div>
<div style="left:2124px;top:1540px;width:212px;height:16px;background:#bdbdbd;border-radius:8px;"></div>
<div style="left:2504px;top:1533px;width:1px;height:29px;background:#b0b0b0;"></div>
<div style="left:2513px;top:1540px;width:1.5px;height:14px;background:#8a8a8a;"></div>
<div style="left:2518px;top:1540px;width:1.5px;height:14px;background:#8a8a8a;"></div>
<div style="left:2528px;top:1533px;width:2px;height:29px;background:#a0a0a0;"></div>
<div style="left:2530px;top:1530px;width:30px;height:34px;background:#efefef;"></div>
<div style="left:132px;top:1565px;width:2428px;height:35px;background:linear-gradient(#f2f2f2 0,#e9e9eb 6%,#e7e7e9 45%,#dcdcde 46%,#dcdcde 88%,#f0f0f0 90%,#e6e6e6 100%);"></div>
<div style="left:336px;top:1565px;width:2px;height:35px;background:#b4b4b4;"></div>
<div style="left:338px;top:1565px;width:1px;height:35px;background:#f4f4f4;"></div>
<div style="left:1134px;top:1565px;width:2px;height:35px;background:#b4b4b4;"></div>
<div style="left:1136px;top:1565px;width:1px;height:35px;background:#f4f4f4;"></div>
<div style="left:1451px;top:1565px;width:2px;height:35px;background:#b4b4b4;"></div>
<div style="left:1453px;top:1565px;width:1px;height:35px;background:#f4f4f4;"></div>
<div style="left:1729px;top:1565px;width:2px;height:35px;background:#b4b4b4;"></div>
<div style="left:1731px;top:1565px;width:1px;height:35px;background:#f4f4f4;"></div>
<div style="left:1798px;top:1565px;width:2px;height:35px;background:#b4b4b4;"></div>
<div style="left:1800px;top:1565px;width:1px;height:35px;background:#f4f4f4;"></div>
<div style="left:1877px;top:1565px;width:2px;height:35px;background:#b4b4b4;"></div>
<div style="left:1879px;top:1565px;width:1px;height:35px;background:#f4f4f4;"></div>
<div style="left:1948px;top:1565px;width:2px;height:35px;background:#b4b4b4;"></div>
<div style="left:1950px;top:1565px;width:1px;height:35px;background:#f4f4f4;"></div>
<div class="t" style="left:138.8px;top:1572.37px;font-size:20px;line-height:20px;font-weight:400;color:#111;letter-spacing:0.85px;">Seitenlayoutansicht</div>
<div class="t" style="left:351px;top:1571.99px;font-size:20.8px;line-height:20.8px;font-weight:400;color:#000;text-shadow:0.3px 0 0 #000;">Bereit</div>
<div class="t" style="left:1142px;top:1572.37px;font-size:20px;line-height:20px;font-weight:400;color:#111;letter-spacing:0.85px;">Seite 1/1</div>
<div class="t" style="left:1458px;top:1572.37px;font-size:20px;line-height:20px;font-weight:400;color:#111;letter-spacing:1.7px;">Summe=0</div>
<svg style="position:absolute;left:1700px;top:1575px" width="24" height="16"><path d="M2 3 H20 L11 12 Z" fill="#111"/></svg>
<div style="left:2559px;top:140px;width:1px;height:1390px;background:#efefef;"></div>
</body></html>
